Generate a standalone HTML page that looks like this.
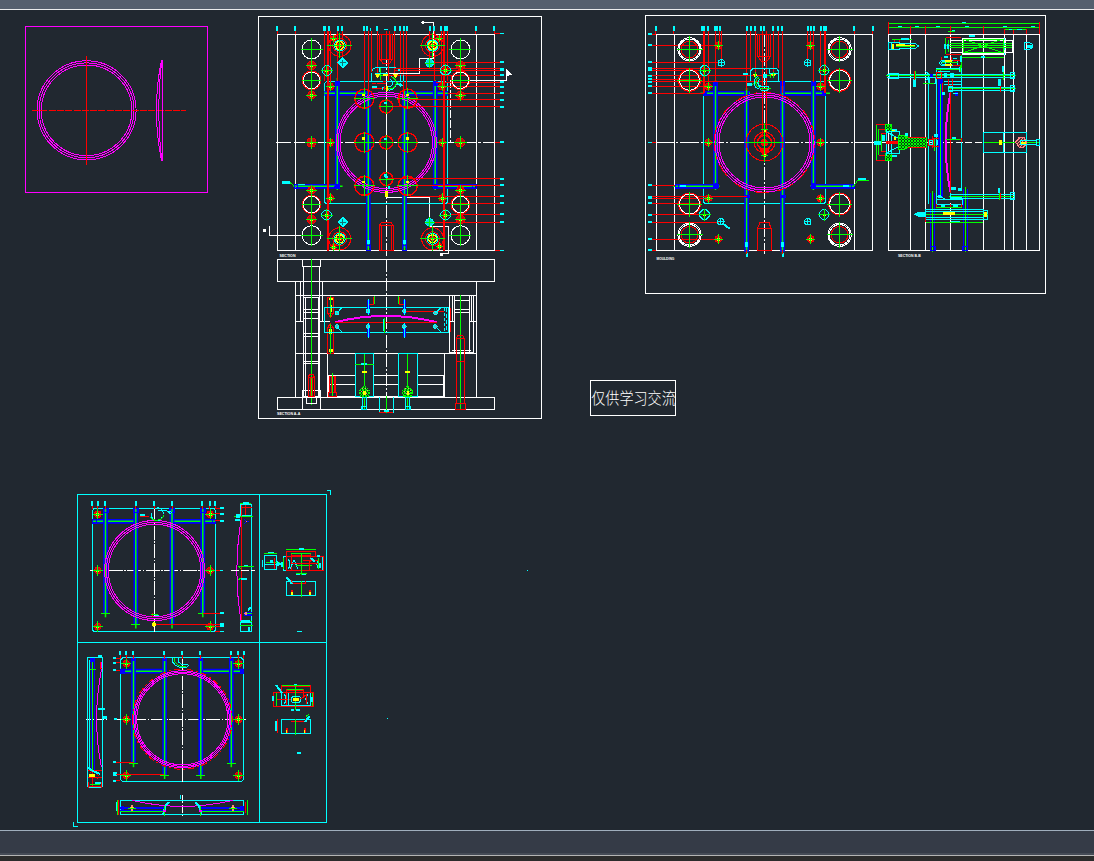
<!DOCTYPE html>
<html><head><meta charset="utf-8"><title>CAD</title>
<style>
html,body{margin:0;padding:0;background:#212830;overflow:hidden}
body{width:1094px;height:861px;position:relative;font-family:"Liberation Sans","Noto Sans CJK SC",sans-serif}
#top{position:absolute;left:0;top:0;width:1094px;height:9px;background:#545f6e}
#topl{position:absolute;left:0;top:9px;width:1094px;height:1px;background:#e8eaec}
#botl{position:absolute;left:0;top:830px;width:1094px;height:1px;background:#a0aebd}
#bot{position:absolute;left:0;top:831px;width:1094px;height:24px;background:#353b47;border-bottom:2px solid #454b56;box-sizing:border-box}
#botl2{position:absolute;left:0;top:855px;width:1094px;height:1px;background:#b4b4b4}
#bot2{position:absolute;left:0;top:856px;width:1094px;height:5px;background:#2b2b2b}
svg{position:absolute;left:0;top:0}
</style></head><body>
<div id="top"></div><div id="topl"></div>
<svg width="1094" height="861" viewBox="0 0 1094 861" fill="none" stroke-linecap="butt" shape-rendering="crispEdges">
<defs><pattern id="hx" width="3" height="3" patternUnits="userSpaceOnUse"><rect width="3" height="3" fill="#0a3a14"/><path d="M0 0L3 3M3 0L0 3" stroke="#00ff00" stroke-width="1"/></pattern><pattern id="hp" width="3" height="3" patternUnits="userSpaceOnUse"><rect width="3" height="3" fill="#5a3030"/><path d="M0 3L3 0" stroke="#ff9090" stroke-width="1"/></pattern></defs>
<path d="M25.5 26.5H207.5V192.5H25.5ZM37.1 110.3a49.5 49.5 0 1 0 99 0a49.5 49.5 0 1 0 -99 0ZM39.2 110.3a47.4 47.4 0 1 0 94.8 0a47.4 47.4 0 1 0 -94.8 0ZM41.3 110.3a45.3 45.3 0 1 0 90.6 0a45.3 45.3 0 1 0 -90.6 0Z" stroke="#ff00ff" stroke-width="1" fill="none"/>
<path d="M86.5 55.6L86.5 164.8" stroke="#ff0000" stroke-width="1" fill="none"/>
<path d="M32 110.5L186 110.5" stroke="#ff0000" stroke-width="1" fill="none" stroke-dasharray="7 1.3"/>
<path d="M162.5 60L162.5 160.8M161.5 60Q151.3 110.3 161.5 160.8M161.5 62Q155.9 110.3 161.5 158.8" stroke="#ff00ff" stroke-width="1" fill="none"/>
<path d="M590.5 380.5H675.5V415.5H590.5ZM258.5 16.5H541.5V418.5H258.5ZM277.5 34.5H494.5V250.5H277.5ZM295.5 34.3L295.5 250.5M476.5 34.3L476.5 250.5" stroke="#ffffff" stroke-width="1" fill="none"/>
<path d="M276 142.5L496 142.5" stroke="#ffffff" stroke-width="1" fill="none" stroke-dasharray="15 3 44 2 3 2"/>
<path d="M386.5 34L386.5 256" stroke="#ffffff" stroke-width="1" fill="none" stroke-dasharray="13 2 2 2"/>
<path d="M423 22.5L433.5 22.5M433.5 22.5L433.5 58.5M419 58.5L434 58.5M419.5 58.5L419.5 73.5M386.5 73.5L419.5 73.5" stroke="#ffffff" stroke-width="1" fill="none"/>
<path d="M421.8 22.3a1.2 1.2 0 1 0 2.4 0a1.2 1.2 0 1 0 -2.4 0Z" stroke="#ffffff" stroke-width="1" fill="#ffffff"/>
<path d="M386.5 197.5L429.5 197.5M429.5 197.3L429.5 226.5M429.3 226.5L448.8 226.5M448.5 226.5L448.5 253M440 253.5L449 253.5" stroke="#ffffff" stroke-width="1" fill="none"/>
<path d="M440 253H443V256H440Z" fill="#ffffff"/>
<path d="M386.5 73.7L386.5 197.3" stroke="#ffffff" stroke-width="1" fill="none"/>
<path d="M450.5 80.3L450.5 142" stroke="#ffffff" stroke-width="1" fill="none" stroke-dasharray="8 2"/>
<path d="M450.6 80.5L507 80.5M506.5 72L506.5 80.8" stroke="#ffffff" stroke-width="1" fill="none"/>
<path d="M506.6 70L511 74.3L506.6 76Z" stroke="#ffffff" stroke-width="1" fill="#ffffff"/>
<path d="M269.5 226L269.5 235.5M269.3 235.5L302.5 235.5" stroke="#ffffff" stroke-width="1" fill="none"/>
<path d="M263 228.5H265.5V232H263Z" fill="#ffffff"/>
<path d="M327.5 81.5H444.5Q447.5 81.5 447.5 84.5V200.5Q447.5 203.5 444.5 203.5H327.5Q324.5 203.5 324.5 200.5V84.5Q324.5 81.5 327.5 81.5Z" stroke="#00ffff" stroke-width="1" fill="none"/>
<path d="M324.3 93.3L366 93.3" stroke="#0000ff" stroke-width="4.7" fill="none" shape-rendering="geometricPrecision"/>
<path d="M324.3 93.3L366 93.3" stroke="#00ff00" stroke-width="1.5" fill="none" shape-rendering="geometricPrecision"/>
<path d="M404 93.3L448 93.3" stroke="#0000ff" stroke-width="4.7" fill="none" shape-rendering="geometricPrecision"/>
<path d="M404 93.3L448 93.3" stroke="#00ff00" stroke-width="1.5" fill="none" shape-rendering="geometricPrecision"/>
<path d="M337.3 83L337.3 188" stroke="#0000ff" stroke-width="4.7" fill="none" shape-rendering="geometricPrecision"/>
<path d="M337.3 78L337.3 190" stroke="#00ff00" stroke-width="1.5" fill="none" shape-rendering="geometricPrecision"/>
<path d="M435.2 83L435.2 188" stroke="#0000ff" stroke-width="4.7" fill="none" shape-rendering="geometricPrecision"/>
<path d="M435.2 80L435.2 190" stroke="#00ff00" stroke-width="1.5" fill="none" shape-rendering="geometricPrecision"/>
<path d="M368.3 91L368.3 248" stroke="#0000ff" stroke-width="4.7" fill="none" shape-rendering="geometricPrecision"/>
<path d="M368.3 91L368.3 250" stroke="#00ff00" stroke-width="1.5" fill="none" shape-rendering="geometricPrecision"/>
<path d="M404.5 91L404.5 248" stroke="#0000ff" stroke-width="4.7" fill="none" shape-rendering="geometricPrecision"/>
<path d="M404.5 91L404.5 250" stroke="#00ff00" stroke-width="1.5" fill="none" shape-rendering="geometricPrecision"/>
<path d="M295.3 186.3L339.6 186.3" stroke="#0000ff" stroke-width="4.7" fill="none" shape-rendering="geometricPrecision"/>
<path d="M293.3 186.3L342.6 186.3" stroke="#00ff00" stroke-width="1.5" fill="none" shape-rendering="geometricPrecision"/>
<path d="M434 186.3L475 186.3" stroke="#0000ff" stroke-width="4.7" fill="none" shape-rendering="geometricPrecision"/>
<path d="M434 186.3L475 186.3" stroke="#00ff00" stroke-width="1.5" fill="none" shape-rendering="geometricPrecision"/>
<path d="M335 81H340V86H335ZM433 81H438V86H433Z" fill="#0000ff"/>
<path d="M294.5 184.5H297.5V188.5H294.5ZM472.5 184.5H476.5V188.5H472.5ZM366.5 245.5H370.5V250.5H366.5ZM402.5 245.5H406.5V250.5H402.5Z" stroke="#0000ff" stroke-width="1" fill="none"/>
<path d="M367 240H369.5V244H367ZM403.3 240H405.8V244H403.3Z" fill="#00ffff"/>
<path d="M335 186.5a2.5 2.5 0 1 0 5 0a2.5 2.5 0 1 0 -5 0ZM432.9 186.5a2.5 2.5 0 1 0 5 0a2.5 2.5 0 1 0 -5 0Z" stroke="#0000ff" stroke-width="1" fill="#0000ff"/>
<path d="M336.3 142.4a50 50 0 1 0 100 0a50 50 0 1 0 -100 0ZM338.2 142.4a48.1 48.1 0 1 0 96.2 0a48.1 48.1 0 1 0 -96.2 0ZM340.1 142.4a46.2 46.2 0 1 0 92.4 0a46.2 46.2 0 1 0 -92.4 0Z" stroke="#ff00ff" stroke-width="1" fill="none"/>
<path d="M281.5 181H290V183.5H281.5Z" fill="#00ffff"/>
<path d="M290 182.5L294 186" stroke="#00ff00" stroke-width="1" fill="none"/>
<path d="M298 183.5H305V185H298ZM276 26H278V31H276ZM294 26H296V31H294ZM328 26H330V31H328ZM337 26H339V31H337ZM341 26H343V31H341ZM363 26H365V31H363ZM366 26H368V31H366ZM376 26H378V31H376ZM394 26H396V31H394ZM399 26H401V31H399ZM403 26H405V31H403ZM406 26H408V31H406ZM429 26H431V31H429ZM433 26H435V31H433ZM440 26H442V31H440ZM475 26H477V31H475ZM493 26H495V31H493ZM323.3 26H326.3V31H323.3ZM443.8 26H448V31H443.8ZM369.5 28H371V31H369.5ZM384 28.5H388V30H384Z" fill="#00ffff"/>
<path d="M324.5 31L324.5 81M330.5 31L330.5 87M337.5 31L337.5 81M342.5 31L342.5 63M364.5 31L364.5 98M368.5 31L368.5 96M377.5 31L377.5 75M394.5 31L394.5 75M400.5 31L400.5 73.5M403.5 31L403.5 98M406.5 31L406.5 89M429.5 31L429.5 63M434.5 31L434.5 81M441.5 31L441.5 86M447.5 31L447.5 81M277.5 31L277.5 34M295.5 31L295.5 34M475.5 31L475.5 34M494.5 31L494.5 34" stroke="#ff0000" stroke-width="1" fill="none"/>
<path d="M328 31L328 250.5M444 31L444 250.5" stroke="#ff0000" stroke-width="2" fill="none"/>
<path d="M386.5 31L386.5 60M389.5 31L389.5 60M379.5 34.5H392.5V59.5H379.5ZM381.5 34.3L381.5 59.4M390.5 34.3L390.5 59.4M380.3 59.4L383 63.6L389.5 63.6L392.3 59.4M379.5 225.5H393.5V250.5H379.5ZM379.5 225.3L381.5 222L391 222L393 225.3M381.5 225.3L381.5 250M391.5 225.3L391.5 250M430 62.5L499.5 62.5" stroke="#ff0000" stroke-width="1" fill="none"/>
<path d="M499.5 61.3H503.5V63.3H499.5Z" fill="#00ffff"/>
<path d="M395 68.5L499.5 68.5" stroke="#ff0000" stroke-width="1" fill="none"/>
<path d="M499.5 67.5H503.5V69.5H499.5Z" fill="#00ffff"/>
<path d="M395 70.5L499.5 70.5" stroke="#ff0000" stroke-width="1" fill="none"/>
<path d="M499.5 69.3H503.5V71.3H499.5Z" fill="#00ffff"/>
<path d="M377 75.5L499.5 75.5" stroke="#ff0000" stroke-width="1" fill="none"/>
<path d="M499.5 74.4H503.5V76.4H499.5Z" fill="#00ffff"/>
<path d="M435.5 82.5L499.5 82.5" stroke="#ff0000" stroke-width="1" fill="none"/>
<path d="M499.5 81.4H503.5V83.4H499.5Z" fill="#00ffff"/>
<path d="M442.5 86.5L499.5 86.5" stroke="#ff0000" stroke-width="1" fill="none"/>
<path d="M499.5 85.6H503.5V87.6H499.5Z" fill="#00ffff"/>
<path d="M448 93.5L499.5 93.5" stroke="#ff0000" stroke-width="1" fill="none"/>
<path d="M499.5 92.3H503.5V94.3H499.5Z" fill="#00ffff"/>
<path d="M409 99.5L499.5 99.5" stroke="#ff0000" stroke-width="1" fill="none"/>
<path d="M499.5 98.5H503.5V100.5H499.5Z" fill="#00ffff"/>
<path d="M386.5 106.5L499.5 106.5" stroke="#ff0000" stroke-width="1" fill="none"/>
<path d="M499.5 105.5H503.5V107.5H499.5Z" fill="#00ffff"/>
<path d="M386.5 178.5L499.5 178.5" stroke="#ff0000" stroke-width="1" fill="none"/>
<path d="M499.5 177.5H503.5V179.5H499.5Z" fill="#00ffff"/>
<path d="M416 185.5L499.5 185.5" stroke="#ff0000" stroke-width="1" fill="none"/>
<path d="M499.5 184.4H503.5V186.4H499.5Z" fill="#00ffff"/>
<path d="M409.5 196.5L499.5 196.5" stroke="#ff0000" stroke-width="1" fill="none"/>
<path d="M499.5 195.3H503.5V197.3H499.5Z" fill="#00ffff"/>
<path d="M447 203.5L499.5 203.5" stroke="#ff0000" stroke-width="1" fill="none"/>
<path d="M499.5 202H503.5V204H499.5Z" fill="#00ffff"/>
<path d="M451 214.5L499.5 214.5" stroke="#ff0000" stroke-width="1" fill="none"/>
<path d="M499.5 213.4H503.5V215.4H499.5Z" fill="#00ffff"/>
<path d="M433 222.5L499.5 222.5" stroke="#ff0000" stroke-width="1" fill="none"/>
<path d="M499.5 221.4H503.5V223.4H499.5Z" fill="#00ffff"/>
<path d="M494.6 33.5L500 33.5" stroke="#ff0000" stroke-width="1" fill="none"/>
<path d="M500 32.8H503.5V34.3H500Z" fill="#00ffff"/>
<path d="M494.6 142.5L500 142.5" stroke="#ff0000" stroke-width="1" fill="none"/>
<path d="M500 141.4H503.5V142.9H500Z" fill="#00ffff"/>
<path d="M494.6 250.5L500 250.5" stroke="#ff0000" stroke-width="1" fill="none"/>
<path d="M500 249.5H503.5V251H500Z" fill="#00ffff"/>
<path d="M302 49.4a9.5 9.5 0 1 0 19 0a9.5 9.5 0 1 0 -19 0Z" stroke="#ffffff" stroke-width="1" fill="none"/>
<path d="M300.5 49.5L322.5 49.5M311.5 38.4L311.5 60.4" stroke="#00ff00" stroke-width="1" fill="none"/>
<path d="M307.2 65.7a4.3 4.3 0 1 0 8.6 0a4.3 4.3 0 1 0 -8.6 0Z" stroke="#ff0000" stroke-width="1" fill="#c01010"/>
<path d="M310 64.7H313V67.2H310Z" fill="#ffff00"/>
<path d="M305.7 65.5L317.3 65.5M311.5 59.9L311.5 71.5" stroke="#00ff00" stroke-width="1" fill="none"/>
<path d="M303.2 80.3a8.3 8.3 0 1 0 16.6 0a8.3 8.3 0 1 0 -16.6 0Z" stroke="#ffffff" stroke-width="1" fill="none"/>
<path d="M302.2 80.3a9.3 9.3 0 1 0 18.6 0a9.3 9.3 0 1 0 -18.6 0Z" stroke="#ff0000" stroke-width="1" fill="none"/>
<path d="M301.7 80.5L321.3 80.5M311.5 70.5L311.5 90.1" stroke="#00ff00" stroke-width="1" fill="none"/>
<path d="M307.7 95.2a3.8 3.8 0 1 0 7.6 0a3.8 3.8 0 1 0 -7.6 0Z" stroke="#ff0000" stroke-width="1" fill="#c01010"/>
<path d="M310 94.2H313V96.7H310Z" fill="#ffff00"/>
<path d="M306.2 95.5L316.8 95.5M311.5 89.9L311.5 100.5" stroke="#00ff00" stroke-width="1" fill="none"/>
<path d="M306.9 142.5a4.6 4.6 0 1 0 9.2 0a4.6 4.6 0 1 0 -9.2 0Z" stroke="#ff0000" stroke-width="1" fill="#c01010"/>
<path d="M310 141.5H313V144H310Z" fill="#ffff00"/>
<path d="M305.4 142.5L317.6 142.5M311.5 136.4L311.5 148.6" stroke="#00ff00" stroke-width="1" fill="none"/>
<path d="M307.7 190.3a3.8 3.8 0 1 0 7.6 0a3.8 3.8 0 1 0 -7.6 0Z" stroke="#ff0000" stroke-width="1" fill="#c01010"/>
<path d="M310 189.3H313V191.8H310Z" fill="#ffff00"/>
<path d="M306.2 190.5L316.8 190.5M311.5 185L311.5 195.6" stroke="#00ff00" stroke-width="1" fill="none"/>
<path d="M303.2 204.5a8.3 8.3 0 1 0 16.6 0a8.3 8.3 0 1 0 -16.6 0Z" stroke="#ffffff" stroke-width="1" fill="none"/>
<path d="M302.2 204.5a9.3 9.3 0 1 0 18.6 0a9.3 9.3 0 1 0 -18.6 0Z" stroke="#ff0000" stroke-width="1" fill="none"/>
<path d="M301.7 204.5L321.3 204.5M311.5 194.7L311.5 214.3" stroke="#00ff00" stroke-width="1" fill="none"/>
<path d="M307.2 219.6a4.3 4.3 0 1 0 8.6 0a4.3 4.3 0 1 0 -8.6 0Z" stroke="#ff0000" stroke-width="1" fill="#c01010"/>
<path d="M310 218.6H313V221.1H310Z" fill="#ffff00"/>
<path d="M305.7 219.5L317.3 219.5M311.5 213.8L311.5 225.4" stroke="#00ff00" stroke-width="1" fill="none"/>
<path d="M302 235.2a9.5 9.5 0 1 0 19 0a9.5 9.5 0 1 0 -19 0Z" stroke="#ffffff" stroke-width="1" fill="none"/>
<path d="M300.5 235.5L322.5 235.5M311.5 224.2L311.5 246.2" stroke="#00ff00" stroke-width="1" fill="none"/>
<path d="M450.9 49.4a9.5 9.5 0 1 0 19 0a9.5 9.5 0 1 0 -19 0Z" stroke="#ffffff" stroke-width="1" fill="none"/>
<path d="M449.4 49.5L471.4 49.5M460.5 38.4L460.5 60.4" stroke="#00ff00" stroke-width="1" fill="none"/>
<path d="M456.1 65.7a4.3 4.3 0 1 0 8.6 0a4.3 4.3 0 1 0 -8.6 0Z" stroke="#ff0000" stroke-width="1" fill="#c01010"/>
<path d="M458.9 64.7H461.9V67.2H458.9Z" fill="#ffff00"/>
<path d="M454.6 65.5L466.2 65.5M460.5 59.9L460.5 71.5" stroke="#00ff00" stroke-width="1" fill="none"/>
<path d="M452.1 80.3a8.3 8.3 0 1 0 16.6 0a8.3 8.3 0 1 0 -16.6 0Z" stroke="#ffffff" stroke-width="1" fill="none"/>
<path d="M451.1 80.3a9.3 9.3 0 1 0 18.6 0a9.3 9.3 0 1 0 -18.6 0Z" stroke="#ff0000" stroke-width="1" fill="none"/>
<path d="M450.6 80.5L470.2 80.5M460.5 70.5L460.5 90.1" stroke="#00ff00" stroke-width="1" fill="none"/>
<path d="M456.6 95.2a3.8 3.8 0 1 0 7.6 0a3.8 3.8 0 1 0 -7.6 0Z" stroke="#ff0000" stroke-width="1" fill="#c01010"/>
<path d="M458.9 94.2H461.9V96.7H458.9Z" fill="#ffff00"/>
<path d="M455.1 95.5L465.7 95.5M460.5 89.9L460.5 100.5" stroke="#00ff00" stroke-width="1" fill="none"/>
<path d="M455.8 142.5a4.6 4.6 0 1 0 9.2 0a4.6 4.6 0 1 0 -9.2 0Z" stroke="#ff0000" stroke-width="1" fill="#c01010"/>
<path d="M458.9 141.5H461.9V144H458.9Z" fill="#ffff00"/>
<path d="M454.3 142.5L466.5 142.5M460.5 136.4L460.5 148.6" stroke="#00ff00" stroke-width="1" fill="none"/>
<path d="M456.6 190.3a3.8 3.8 0 1 0 7.6 0a3.8 3.8 0 1 0 -7.6 0Z" stroke="#ff0000" stroke-width="1" fill="#c01010"/>
<path d="M458.9 189.3H461.9V191.8H458.9Z" fill="#ffff00"/>
<path d="M455.1 190.5L465.7 190.5M460.5 185L460.5 195.6" stroke="#00ff00" stroke-width="1" fill="none"/>
<path d="M452.1 204.5a8.3 8.3 0 1 0 16.6 0a8.3 8.3 0 1 0 -16.6 0Z" stroke="#ffffff" stroke-width="1" fill="none"/>
<path d="M451.1 204.5a9.3 9.3 0 1 0 18.6 0a9.3 9.3 0 1 0 -18.6 0Z" stroke="#ff0000" stroke-width="1" fill="none"/>
<path d="M450.6 204.5L470.2 204.5M460.5 194.7L460.5 214.3" stroke="#00ff00" stroke-width="1" fill="none"/>
<path d="M456.1 219.6a4.3 4.3 0 1 0 8.6 0a4.3 4.3 0 1 0 -8.6 0Z" stroke="#ff0000" stroke-width="1" fill="#c01010"/>
<path d="M458.9 218.6H461.9V221.1H458.9Z" fill="#ffff00"/>
<path d="M454.6 219.5L466.2 219.5M460.5 213.8L460.5 225.4" stroke="#00ff00" stroke-width="1" fill="none"/>
<path d="M450.9 235.2a9.5 9.5 0 1 0 19 0a9.5 9.5 0 1 0 -19 0Z" stroke="#ffffff" stroke-width="1" fill="none"/>
<path d="M449.4 235.5L471.4 235.5M460.5 224.2L460.5 246.2" stroke="#00ff00" stroke-width="1" fill="none"/>
<path d="M327.1 86.6a3.2 3.2 0 1 0 6.4 0a3.2 3.2 0 1 0 -6.4 0Z" stroke="#ff0000" stroke-width="1" fill="#c01010"/>
<path d="M328.8 85.6H331.8V88.1H328.8Z" fill="#ffff00"/>
<path d="M325.6 86.5L335 86.5M330.5 81.9L330.5 91.3" stroke="#00ff00" stroke-width="1" fill="none"/>
<path d="M438.8 86.6a3.2 3.2 0 1 0 6.4 0a3.2 3.2 0 1 0 -6.4 0Z" stroke="#ff0000" stroke-width="1" fill="#c01010"/>
<path d="M440.5 85.6H443.5V88.1H440.5Z" fill="#ffff00"/>
<path d="M437.3 86.5L446.7 86.5M442.5 81.9L442.5 91.3" stroke="#00ff00" stroke-width="1" fill="none"/>
<path d="M327 142.5a3.2 3.2 0 1 0 6.4 0a3.2 3.2 0 1 0 -6.4 0Z" stroke="#ff0000" stroke-width="1" fill="#c01010"/>
<path d="M328.7 141.5H331.7V144H328.7Z" fill="#ffff00"/>
<path d="M325.5 142.5L334.9 142.5M330.5 137.8L330.5 147.2" stroke="#00ff00" stroke-width="1" fill="none"/>
<path d="M439 142.5a3.2 3.2 0 1 0 6.4 0a3.2 3.2 0 1 0 -6.4 0Z" stroke="#ff0000" stroke-width="1" fill="#c01010"/>
<path d="M440.7 141.5H443.7V144H440.7Z" fill="#ffff00"/>
<path d="M437.5 142.5L446.9 142.5M442.5 137.8L442.5 147.2" stroke="#00ff00" stroke-width="1" fill="none"/>
<path d="M327 198a3.2 3.2 0 1 0 6.4 0a3.2 3.2 0 1 0 -6.4 0Z" stroke="#ff0000" stroke-width="1" fill="#c01010"/>
<path d="M328.7 197H331.7V199.5H328.7Z" fill="#ffff00"/>
<path d="M325.5 198.5L334.9 198.5M330.5 193.3L330.5 202.7" stroke="#00ff00" stroke-width="1" fill="none"/>
<path d="M439 198a3.2 3.2 0 1 0 6.4 0a3.2 3.2 0 1 0 -6.4 0Z" stroke="#ff0000" stroke-width="1" fill="#c01010"/>
<path d="M440.7 197H443.7V199.5H440.7Z" fill="#ffff00"/>
<path d="M437.5 198.5L446.9 198.5M442.5 193.3L442.5 202.7" stroke="#00ff00" stroke-width="1" fill="none"/>
<path d="M328.8 45.5a11 11 0 1 0 22 0a11 11 0 1 0 -22 0ZM332.8 45.5a7 7 0 1 0 14 0a7 7 0 1 0 -14 0Z" stroke="#ff0000" stroke-width="1" fill="none"/>
<path d="M334.3 45.5a5.5 5.5 0 1 0 11 0a5.5 5.5 0 1 0 -11 0Z" stroke="#00ffff" stroke-width="1" fill="none"/>
<path d="M335.8 45.5a4 4 0 1 0 8 0a4 4 0 1 0 -8 0Z" stroke="#ffff00" stroke-width="1.5" fill="none"/>
<path d="M337.8 45.5a2 2 0 1 0 4 0a2 2 0 1 0 -4 0Z" stroke="#ff0000" stroke-width="1" fill="#ffff00"/>
<path d="M327.3 45.5L352.3 45.5M339.5 33L339.5 58" stroke="#00ff00" stroke-width="1" fill="none"/>
<path d="M421.6 45.5a11 11 0 1 0 22 0a11 11 0 1 0 -22 0ZM425.6 45.5a7 7 0 1 0 14 0a7 7 0 1 0 -14 0Z" stroke="#ff0000" stroke-width="1" fill="none"/>
<path d="M427.1 45.5a5.5 5.5 0 1 0 11 0a5.5 5.5 0 1 0 -11 0Z" stroke="#00ffff" stroke-width="1" fill="none"/>
<path d="M428.6 45.5a4 4 0 1 0 8 0a4 4 0 1 0 -8 0Z" stroke="#ffff00" stroke-width="1.5" fill="none"/>
<path d="M430.6 45.5a2 2 0 1 0 4 0a2 2 0 1 0 -4 0Z" stroke="#ff0000" stroke-width="1" fill="#ffff00"/>
<path d="M420.1 45.5L445.1 45.5M432.5 33L432.5 58" stroke="#00ff00" stroke-width="1" fill="none"/>
<path d="M328.7 238.8a11 11 0 1 0 22 0a11 11 0 1 0 -22 0ZM332.7 238.8a7 7 0 1 0 14 0a7 7 0 1 0 -14 0Z" stroke="#ff0000" stroke-width="1" fill="none"/>
<path d="M334.2 238.8a5.5 5.5 0 1 0 11 0a5.5 5.5 0 1 0 -11 0Z" stroke="#00ffff" stroke-width="1" fill="none"/>
<path d="M335.7 238.8a4 4 0 1 0 8 0a4 4 0 1 0 -8 0Z" stroke="#ffff00" stroke-width="1.5" fill="none"/>
<path d="M337.7 238.8a2 2 0 1 0 4 0a2 2 0 1 0 -4 0Z" stroke="#ff0000" stroke-width="1" fill="#ffff00"/>
<path d="M327.2 238.5L352.2 238.5M339.5 226.3L339.5 251.3" stroke="#00ff00" stroke-width="1" fill="none"/>
<path d="M421.5 238.8a11 11 0 1 0 22 0a11 11 0 1 0 -22 0ZM425.5 238.8a7 7 0 1 0 14 0a7 7 0 1 0 -14 0Z" stroke="#ff0000" stroke-width="1" fill="none"/>
<path d="M427 238.8a5.5 5.5 0 1 0 11 0a5.5 5.5 0 1 0 -11 0Z" stroke="#00ffff" stroke-width="1" fill="none"/>
<path d="M428.5 238.8a4 4 0 1 0 8 0a4 4 0 1 0 -8 0Z" stroke="#ffff00" stroke-width="1.5" fill="none"/>
<path d="M430.5 238.8a2 2 0 1 0 4 0a2 2 0 1 0 -4 0Z" stroke="#ff0000" stroke-width="1" fill="#ffff00"/>
<path d="M420 238.5L445 238.5M432.5 226.3L432.5 251.3" stroke="#00ff00" stroke-width="1" fill="none"/>
<path d="M331.3 38.5a2.2 2.2 0 1 0 4.4 0a2.2 2.2 0 1 0 -4.4 0Z" stroke="#ff0000" stroke-width="1" fill="#c01010"/>
<path d="M332 37.5H335V40H332Z" fill="#ffff00"/>
<path d="M329.8 38.5L337.2 38.5M333.5 34.8L333.5 42.2" stroke="#00ff00" stroke-width="1" fill="none"/>
<path d="M436.8 38.5a2.2 2.2 0 1 0 4.4 0a2.2 2.2 0 1 0 -4.4 0Z" stroke="#ff0000" stroke-width="1" fill="#c01010"/>
<path d="M437.5 37.5H440.5V40H437.5Z" fill="#ffff00"/>
<path d="M435.3 38.5L442.7 38.5M439.5 34.8L439.5 42.2" stroke="#00ff00" stroke-width="1" fill="none"/>
<path d="M331.3 247a2.2 2.2 0 1 0 4.4 0a2.2 2.2 0 1 0 -4.4 0Z" stroke="#ff0000" stroke-width="1" fill="#c01010"/>
<path d="M332 246H335V248.5H332Z" fill="#ffff00"/>
<path d="M329.8 247.5L337.2 247.5M333.5 243.3L333.5 250.7" stroke="#00ff00" stroke-width="1" fill="none"/>
<path d="M437.3 246a2.2 2.2 0 1 0 4.4 0a2.2 2.2 0 1 0 -4.4 0Z" stroke="#ff0000" stroke-width="1" fill="#c01010"/>
<path d="M438 245H441V247.5H438Z" fill="#ffff00"/>
<path d="M435.8 246.5L443.2 246.5M439.5 242.3L439.5 249.7" stroke="#00ff00" stroke-width="1" fill="none"/>
<path d="M347.4 62.9L342.6 67.7L337.8 62.9L342.6 58.1Z" stroke="#00ffff" stroke-width="1" fill="#00ffff"/>
<path d="M339.6 62.5L345.6 62.5M342.5 59.9L342.5 65.9" stroke="#107070" stroke-width="1" fill="none"/>
<path d="M347.6 222L342.8 226.8L338 222L342.8 217.2Z" stroke="#00ffff" stroke-width="1" fill="#00ffff"/>
<path d="M339.8 222.5L345.8 222.5M342.5 219L342.5 225" stroke="#107070" stroke-width="1" fill="none"/>
<path d="M425.8 63a3.8 3.8 0 1 0 7.6 0a3.8 3.8 0 1 0 -7.6 0Z" stroke="#00ffff" stroke-width="1" fill="#00d8d8"/>
<path d="M424.6 63.5L434.6 63.5M429.5 58L429.5 68" stroke="#00ff00" stroke-width="1" fill="none"/>
<path d="M425.7 222.4a3.8 3.8 0 1 0 7.6 0a3.8 3.8 0 1 0 -7.6 0Z" stroke="#00ffff" stroke-width="1" fill="#00d8d8"/>
<path d="M424.5 222.5L434.5 222.5M429.5 217.4L429.5 227.4" stroke="#00ff00" stroke-width="1" fill="none"/>
<path d="M331.42 72.4L328.73 75.11L324.9 75.12L322.19 72.43L322.18 68.6L324.87 65.89L328.7 65.88L331.41 68.57Z" stroke="#00ffff" stroke-width="1" fill="none"/>
<path d="M325.3 69.5H328.3V72H325.3Z" fill="#ffff00"/>
<path d="M320.8 70.5L332.8 70.5M326.5 64.5L326.5 76.5" stroke="#00ff00" stroke-width="1" fill="none"/>
<path d="M450.12 72.2L447.43 74.91L443.6 74.92L440.89 72.23L440.88 68.4L443.57 65.69L447.4 65.68L450.11 68.37Z" stroke="#00ffff" stroke-width="1" fill="none"/>
<path d="M444 69.3H447V71.8H444Z" fill="#ffff00"/>
<path d="M439.5 70.5L451.5 70.5M445.5 64.3L445.5 76.3" stroke="#00ff00" stroke-width="1" fill="none"/>
<path d="M331.22 216.9L328.53 219.61L324.7 219.62L321.99 216.93L321.98 213.1L324.67 210.39L328.5 210.38L331.21 213.07Z" stroke="#00ffff" stroke-width="1" fill="none"/>
<path d="M325.1 214H328.1V216.5H325.1Z" fill="#ffff00"/>
<path d="M320.6 215.5L332.6 215.5M326.5 209L326.5 221" stroke="#00ff00" stroke-width="1" fill="none"/>
<path d="M450.02 216.9L447.33 219.61L443.5 219.62L440.79 216.93L440.78 213.1L443.47 210.39L447.3 210.38L450.01 213.07Z" stroke="#00ffff" stroke-width="1" fill="none"/>
<path d="M443.9 214H446.9V216.5H443.9Z" fill="#ffff00"/>
<path d="M439.4 215.5L451.4 215.5M445.5 209L445.5 221" stroke="#00ff00" stroke-width="1" fill="none"/>
<path d="M354.9 98.7a9.5 9.5 0 1 0 19 0a9.5 9.5 0 1 0 -19 0Z" stroke="#ff0000" stroke-width="1.5" fill="none"/>
<path d="M353.9 98.5L374.9 98.5M364.5 88.2L364.5 109.2" stroke="#00ff00" stroke-width="1" fill="none"/>
<path d="M362.4 93.7H365.4V96.2H362.4Z" fill="#ffff00"/>
<path d="M354.9 142.4a9.5 9.5 0 1 0 19 0a9.5 9.5 0 1 0 -19 0Z" stroke="#ff0000" stroke-width="1.5" fill="none"/>
<path d="M353.9 142.5L374.9 142.5M364.5 131.9L364.5 152.9" stroke="#00ff00" stroke-width="1" fill="none"/>
<path d="M362.4 137.4H365.4V139.9H362.4Z" fill="#ffff00"/>
<path d="M354.9 185.9a9.5 9.5 0 1 0 19 0a9.5 9.5 0 1 0 -19 0Z" stroke="#ff0000" stroke-width="1.5" fill="none"/>
<path d="M353.9 185.5L374.9 185.5M364.5 175.4L364.5 196.4" stroke="#00ff00" stroke-width="1" fill="none"/>
<path d="M362.4 180.9H365.4V183.4H362.4Z" fill="#ffff00"/>
<path d="M398.1 98.7a9.5 9.5 0 1 0 19 0a9.5 9.5 0 1 0 -19 0Z" stroke="#ff0000" stroke-width="1.5" fill="none"/>
<path d="M397.1 98.5L418.1 98.5M407.5 88.2L407.5 109.2" stroke="#00ff00" stroke-width="1" fill="none"/>
<path d="M405.6 93.7H408.6V96.2H405.6Z" fill="#ffff00"/>
<path d="M398.1 142.4a9.5 9.5 0 1 0 19 0a9.5 9.5 0 1 0 -19 0Z" stroke="#ff0000" stroke-width="1.5" fill="none"/>
<path d="M397.1 142.5L418.1 142.5M407.5 131.9L407.5 152.9" stroke="#00ff00" stroke-width="1" fill="none"/>
<path d="M405.6 137.4H408.6V139.9H405.6Z" fill="#ffff00"/>
<path d="M398.1 185.9a9.5 9.5 0 1 0 19 0a9.5 9.5 0 1 0 -19 0Z" stroke="#ff0000" stroke-width="1.5" fill="none"/>
<path d="M397.1 185.5L418.1 185.5M407.5 175.4L407.5 196.4" stroke="#00ff00" stroke-width="1" fill="none"/>
<path d="M405.6 180.9H408.6V183.4H405.6Z" fill="#ffff00"/>
<path d="M379.8 106.5a6.5 6.5 0 1 0 13 0a6.5 6.5 0 1 0 -13 0Z" stroke="#ff0000" stroke-width="1.5" fill="none"/>
<path d="M378.8 106.5L393.8 106.5M386.5 99L386.5 114" stroke="#00ff00" stroke-width="1" fill="none"/>
<path d="M384.3 101.5H387.3V104H384.3Z" fill="#00ffff"/>
<path d="M379.8 142.5a6.5 6.5 0 1 0 13 0a6.5 6.5 0 1 0 -13 0Z" stroke="#ff0000" stroke-width="1.5" fill="none"/>
<path d="M378.8 142.5L393.8 142.5M386.5 135L386.5 150" stroke="#00ff00" stroke-width="1" fill="none"/>
<path d="M384.3 137.5H387.3V140H384.3Z" fill="#00ffff"/>
<path d="M379.8 179a6.5 6.5 0 1 0 13 0a6.5 6.5 0 1 0 -13 0Z" stroke="#ff0000" stroke-width="1.5" fill="none"/>
<path d="M378.8 179.5L393.8 179.5M386.5 171.5L386.5 186.5" stroke="#00ff00" stroke-width="1" fill="none"/>
<path d="M384.3 174H387.3V176.5H384.3Z" fill="#00ffff"/>
<path d="M371.7 82L371.7 72.5M371.7 72.5Q372 68 376 67.9M376 67.5L395.5 67.5M379.5 67.9L379.5 71.5" stroke="#00ffff" stroke-width="1" fill="none"/>
<path d="M398 69.3H400V70.6H398Z" fill="#00ffff"/>
<path d="M400.5 75L400.5 81.4M403.5 75L403.5 81.4" stroke="#00ffff" stroke-width="1" fill="none"/>
<path d="M380.5 67.5L380.5 79.5M377 75.5L385 75.5" stroke="#00ff00" stroke-width="1" fill="none"/>
<path d="M375 73.5L388 73.5" stroke="#00ffff" stroke-width="1" fill="none"/>
<path d="M387.8 73.5L419.5 73.5" stroke="#ffffff" stroke-width="1" fill="none"/>
<path d="M376 74.5L379.2 74.5L377.6 77.5ZM394 74.5L397.2 74.5L395.6 77.5Z" stroke="#ffff00" stroke-width="1" fill="#ffff00"/>
<path d="M382.9 74.2H387.8V76H382.9Z" fill="#ffff00"/>
<path d="M391.2 76.6A6.8 6.8 0 0 1 387.8 89.8" stroke="#00ffff" stroke-width="1" fill="none"/>
<path d="M392.3 77.3A5.6 5.6 0 0 1 388.4 88.4" stroke="#00ff00" stroke-width="1" fill="none"/>
<path d="M390 79.5A3.6 3.6 0 0 1 388 86.5" stroke="#00ffff" stroke-width="1" fill="none"/>
<path d="M397.9 83L400 83L402.7 85.5L400.5 86L397.9 84.2Z" stroke="#00ffff" stroke-width="1" fill="#00ffff"/>
<path d="M396 82.5L399.6 83.5" stroke="#00ff00" stroke-width="1" fill="none"/>
<path d="M372 83.5L376 83.5M377.3 83.5L386.4 83.5M372 88.5L386 88.5" stroke="#ff0000" stroke-width="1" fill="none"/>
<path d="M372 86H377V88.2H372Z" fill="#00ffff"/>
<path d="M382.5 81.5L386 81.5" stroke="#ff0000" stroke-width="1" fill="none"/>
<path d="M385 86.7A3 3 0 0 0 382 90" stroke="#00ffff" stroke-width="1" fill="none"/>
<path d="M385.7 85.7H387.5V90.5H385.7Z" fill="#ffff00"/>
<path d="M384.5 86L384.5 90M371.5 31L371.5 72M388.5 60L388.5 81M399.6 94L399.6 106.6L393 106.6" stroke="#ff0000" stroke-width="1" fill="none"/>
<path d="M384.8 191H387.5V197H384.8Z" fill="#ffff00"/>
<path d="M387.5 186H390V188.5H387.5ZM384.5 176H388V178H384.5Z" fill="#00ffff"/>
<path d="M277.5 259.5H494.5V281.5H277.5ZM277.5 397.5H494.5V409.5H277.5ZM295.5 281.5L295.5 397.4M476.5 281.5L476.5 397.4M295.6 295.5L476.3 295.5M295.6 353.5L476.3 353.5M295.6 321.5L303 321.5M320 321.5L330 321.5" stroke="#ffffff" stroke-width="1" fill="none"/>
<path d="M386.5 259L386.5 409" stroke="#ffffff" stroke-width="1" fill="none" stroke-dasharray="13 2 2 2"/>
<path d="M302.5 259.5H320.5V266.5H302.5ZM303.5 266L303.5 397.4M319.5 266L319.5 397.4M305.5 297L305.5 397M318.5 297L318.5 397M303.8 297.5L319.6 297.5M303.8 309.5L319.6 309.5M303.8 312.5L319.6 312.5M303.8 318.5L319.6 318.5M303.8 333.5L319.6 333.5M303.8 336.5L319.6 336.5M303.8 361.5L319.6 361.5M303.8 363.5L319.6 363.5M303.8 390.5L319.6 390.5M300.5 281.5L300.5 321M322.5 281.5L322.5 321M302.4 396.5L320.4 396.5M302.5 390L302.5 409M320.5 390L320.5 409" stroke="#ffffff" stroke-width="1" fill="none"/>
<path d="M311.5 259L311.5 405" stroke="#00ff00" stroke-width="1" fill="none"/>
<path d="M308.5 377.5H314.5V396.5H308.5ZM308.3 377L309.5 374.4L313 374.4L314.3 377M310.5 377L310.5 396M312.5 377L312.5 396" stroke="#ff0000" stroke-width="1" fill="none"/>
<path d="M306.5 397.5H316.5V403.5H306.5Z" stroke="#ffffff" stroke-width="1" fill="none"/>
<path d="M327.5 297.5H333.5V313.5H327.5ZM327.6 313L330.5 317.5L333.4 313" stroke="#ff0000" stroke-width="1" fill="none"/>
<path d="M328.5 297.5H332.5V299.5H328.5ZM329.5 305H331.5V312H329.5Z" fill="#ffff00"/>
<path d="M330.5 295.7L330.5 317" stroke="#00ff00" stroke-width="1" fill="none"/>
<path d="M327.5 327.5H333.5V353.5H327.5ZM327.8 327L330.4 324L333 327" stroke="#ff0000" stroke-width="1" fill="none"/>
<path d="M329.3 329H331.5V334H329.3ZM329 349H332.5V352H329Z" fill="#ffff00"/>
<path d="M330.5 324L330.5 353.6" stroke="#00ff00" stroke-width="1" fill="none"/>
<path d="M327.5 353.6L327.5 397.4" stroke="#ffffff" stroke-width="1" fill="none"/>
<path d="M324.5 307.5H448.5V332.5H324.5Z" stroke="#00ffff" stroke-width="1" fill="none"/>
<path d="M335.3 322.2Q386 309.6 436.7 322.2" stroke="#ff00ff" stroke-width="2" fill="none"/>
<path d="M335 322.5L437 322.5M404 311.5L444 311.5" stroke="#ff0000" stroke-width="1" fill="none"/>
<path d="M367.5 300L367.5 314M369.5 300L369.5 314M367.5 324L367.5 337M369.5 324L369.5 337" stroke="#0000ff" stroke-width="1" fill="none"/>
<path d="M366.4 311a1.8 1.8 0 1 0 3.6 0a1.8 1.8 0 1 0 -3.6 0ZM366.4 326.5a1.8 1.8 0 1 0 3.6 0a1.8 1.8 0 1 0 -3.6 0Z" stroke="#00ffff" stroke-width="1" fill="#80a0a0"/>
<path d="M368.5 299L368.5 315M368.5 323L368.5 338" stroke="#00ffff" stroke-width="1" fill="none"/>
<path d="M403.5 300L403.5 314M405.5 300L405.5 314M403.5 324L403.5 337M405.5 324L405.5 337" stroke="#0000ff" stroke-width="1" fill="none"/>
<path d="M402.5 311a1.8 1.8 0 1 0 3.6 0a1.8 1.8 0 1 0 -3.6 0ZM402.5 326.5a1.8 1.8 0 1 0 3.6 0a1.8 1.8 0 1 0 -3.6 0Z" stroke="#00ffff" stroke-width="1" fill="#80a0a0"/>
<path d="M404.5 299L404.5 315M404.5 323L404.5 338" stroke="#00ffff" stroke-width="1" fill="none"/>
<path d="M368.5 304L373.5 304L373.5 297" stroke="#ff0000" stroke-width="1" fill="none"/>
<path d="M374.5 296L374.5 304" stroke="#00ff00" stroke-width="1" fill="none"/>
<path d="M404 304L399 304L399 297" stroke="#ff0000" stroke-width="1" fill="none"/>
<path d="M398.5 296L398.5 304" stroke="#00ff00" stroke-width="1" fill="none"/>
<path d="M335.2 313a1.8 1.8 0 1 0 3.6 0a1.8 1.8 0 1 0 -3.6 0ZM335.2 326.5a1.8 1.8 0 1 0 3.6 0a1.8 1.8 0 1 0 -3.6 0Z" stroke="#00ffff" stroke-width="1" fill="#80a0a0"/>
<path d="M337 313L342 307.5M337 326.5L342 332" stroke="#00ffff" stroke-width="1" fill="none"/>
<path d="M433.7 313a1.8 1.8 0 1 0 3.6 0a1.8 1.8 0 1 0 -3.6 0ZM433.7 326.5a1.8 1.8 0 1 0 3.6 0a1.8 1.8 0 1 0 -3.6 0Z" stroke="#00ffff" stroke-width="1" fill="#80a0a0"/>
<path d="M435.5 313L441 307.5M435.5 326.5L441 332" stroke="#00ffff" stroke-width="1" fill="none"/>
<path d="M384.5 318L384.5 333" stroke="#00ff00" stroke-width="1" fill="none"/>
<path d="M383.5 319L383.5 331" stroke="#00ffff" stroke-width="1" fill="none"/>
<path d="M444.5 308L444.5 332" stroke="#00ffff" stroke-width="1" fill="none" stroke-dasharray="3 2"/>
<path d="M446.5 308L446.5 332" stroke="#00ffff" stroke-width="1" fill="none" stroke-dasharray="4 2"/>
<path d="M449.5 307L449.5 333" stroke="#00ff00" stroke-width="1" fill="none"/>
<path d="M450.5 308L450.5 332" stroke="#ff0000" stroke-width="1" fill="none"/>
<path d="M328.2 375.5L355 375.5M328.2 384.5L355 384.5M328.2 396.5L355 396.5M373.9 375.5L398 375.5M373.9 384.5L398 384.5M373.9 396.5L398 396.5M417 375.5L443.8 375.5M417 384.5L443.8 384.5M417 396.5L443.8 396.5M328.5 375.4L328.5 396M443.5 375.4L443.5 396" stroke="#ffffff" stroke-width="1" fill="none"/>
<path d="M329.5 376.5H335.5V392.5H329.5ZM328.5 392.5H336.5V396.5H328.5Z" stroke="#ff0000" stroke-width="1" fill="none"/>
<path d="M332.5 373L332.5 396" stroke="#00ff00" stroke-width="1" fill="none"/>
<path d="M331.5 376L331.5 392M334.5 376L334.5 392" stroke="#ff0000" stroke-width="1" fill="none"/>
<path d="M355.5 353.5H373.5V396.5H355.5Z" stroke="#00ffff" stroke-width="1" fill="none"/>
<path d="M355 364.5L373.9 364.5" stroke="#00ff00" stroke-width="1" fill="none"/>
<path d="M361.45 363H367.45V365H361.45Z" fill="#00ffff"/>
<path d="M364.5 353.6L364.5 410" stroke="#00ff00" stroke-width="1" fill="none"/>
<path d="M361.95 370.5H366.95V372.5H361.95Z" fill="#ffff00"/>
<path d="M364.45 385.5L369.95 391L368.45 396.5H360.45L358.95 391Z" fill="url(#hx)" stroke="#00ff00" stroke-width="1" stroke-dasharray="2 1"/>
<path d="M361.45 391a3 3 0 1 0 6 0a3 3 0 1 0 -6 0Z" stroke="#ff8080" stroke-width="1" fill="none" stroke-dasharray="1 2"/>
<path d="M363.45 391H365.95V395H363.45Z" fill="#ffff00"/>
<path d="M362.5 397.5H366.5V409.5H362.5ZM361.5 406.5H366.5V409.5H361.5ZM398.5 353.5H417.5V396.5H398.5Z" stroke="#00ffff" stroke-width="1" fill="none"/>
<path d="M407.5 353.6L407.5 410" stroke="#00ff00" stroke-width="1" fill="none"/>
<path d="M405 370.5H410V372.5H405Z" fill="#ffff00"/>
<path d="M407.5 385.5L413 391L411.5 396.5H403.5L402 391Z" fill="url(#hx)" stroke="#00ff00" stroke-width="1" stroke-dasharray="2 1"/>
<path d="M404.5 391a3 3 0 1 0 6 0a3 3 0 1 0 -6 0Z" stroke="#ff8080" stroke-width="1" fill="none" stroke-dasharray="1 2"/>
<path d="M406.5 391H409V395H406.5Z" fill="#ffff00"/>
<path d="M405.5 397.5H409.5V409.5H405.5ZM405.5 406.5H410.5V409.5H405.5ZM379.5 397.4L379.5 412.6M393.5 397.4L393.5 412.6" stroke="#00ffff" stroke-width="1" fill="none"/>
<path d="M379 412.5L393.2 412.5" stroke="#ff0000" stroke-width="1" fill="none"/>
<path d="M386.5 396L386.5 413" stroke="#00ff00" stroke-width="1" fill="none"/>
<path d="M384 410H389V412H384Z" fill="#00ffff"/>
<path d="M444.5 353.6L444.5 397.4M449.5 295.5H473.5V352.5H449.5ZM454.5 295L454.5 352M469.5 295L469.5 352M454 300.5L469 300.5M454 309.5L469 309.5M454 312.5L469 312.5M449.9 321.5L454 321.5M469.2 321.5L476.3 321.5M452 350.5L471 350.5M452.5 295L452.5 321M471.5 295L471.5 321" stroke="#ffffff" stroke-width="1" fill="none"/>
<path d="M460.5 295L460.5 409" stroke="#00ff00" stroke-width="1" fill="none"/>
<path d="M456.5 338.5H464.5V403.5H456.5ZM456.4 338L458 335.4L462.5 335.4L464.1 338M455.5 403.5H465.5V409.5H455.5ZM456.4 361.5L464.1 361.5" stroke="#ff0000" stroke-width="1" fill="none"/>
<path d="M645.5 15.5H1045.5V293.5H645.5ZM656.5 34.5H872.5V250.5H656.5ZM674.5 34.4L674.5 250.4M854.5 34.4L854.5 250.4" stroke="#ffffff" stroke-width="1" fill="none"/>
<path d="M655 142.5L873 142.5" stroke="#ffffff" stroke-width="1" fill="none" stroke-dasharray="19 2 2 2"/>
<path d="M764.5 34L764.5 254" stroke="#ffffff" stroke-width="1" fill="none" stroke-dasharray="13 2 2 2"/>
<path d="M706.5 81.5H822.5Q825.5 81.5 825.5 84.5V200.5Q825.5 203.5 822.5 203.5H706.5Q703.5 203.5 703.5 200.5V84.5Q703.5 81.5 706.5 81.5Z" stroke="#00ffff" stroke-width="1" fill="none"/>
<path d="M703.4 93.3L750 93.3" stroke="#0000ff" stroke-width="4.7" fill="none" shape-rendering="geometricPrecision"/>
<path d="M700.4 93.3L750 93.3" stroke="#00ff00" stroke-width="1.5" fill="none" shape-rendering="geometricPrecision"/>
<path d="M780.5 93.3L826 93.3" stroke="#0000ff" stroke-width="4.7" fill="none" shape-rendering="geometricPrecision"/>
<path d="M780.5 93.3L830 93.3" stroke="#00ff00" stroke-width="1.5" fill="none" shape-rendering="geometricPrecision"/>
<path d="M715.5 83L715.5 188" stroke="#0000ff" stroke-width="4.7" fill="none" shape-rendering="geometricPrecision"/>
<path d="M715.5 80L715.5 190" stroke="#00ff00" stroke-width="1.5" fill="none" shape-rendering="geometricPrecision"/>
<path d="M813.4 83L813.4 188" stroke="#0000ff" stroke-width="4.7" fill="none" shape-rendering="geometricPrecision"/>
<path d="M813.4 80L813.4 190" stroke="#00ff00" stroke-width="1.5" fill="none" shape-rendering="geometricPrecision"/>
<path d="M746.6 91L746.6 252" stroke="#0000ff" stroke-width="4.7" fill="none" shape-rendering="geometricPrecision"/>
<path d="M746.6 88L746.6 254" stroke="#00ff00" stroke-width="1.5" fill="none" shape-rendering="geometricPrecision"/>
<path d="M782.5 83L782.5 252" stroke="#0000ff" stroke-width="4.7" fill="none" shape-rendering="geometricPrecision"/>
<path d="M782.5 80L782.5 254" stroke="#00ff00" stroke-width="1.5" fill="none" shape-rendering="geometricPrecision"/>
<path d="M675 186.3L717.6 186.3" stroke="#0000ff" stroke-width="4.7" fill="none" shape-rendering="geometricPrecision"/>
<path d="M673 186.3L719.6 186.3" stroke="#00ff00" stroke-width="1.5" fill="none" shape-rendering="geometricPrecision"/>
<path d="M812 186.3L854 186.3" stroke="#0000ff" stroke-width="4.7" fill="none" shape-rendering="geometricPrecision"/>
<path d="M810 186.3L854 186.3" stroke="#00ff00" stroke-width="1.5" fill="none" shape-rendering="geometricPrecision"/>
<path d="M713 81H718V85.5H713ZM780 81H785V85.5H780ZM810.9 81H815.9V85.5H810.9ZM703 91H707V96H703ZM822 91H826V96H822Z" fill="#0000ff"/>
<path d="M675.5 184.5H678.5V188.5H675.5ZM851.5 184.5H854.5V188.5H851.5Z" stroke="#0000ff" stroke-width="1" fill="none"/>
<path d="M713.5 186.3a2.5 2.5 0 1 0 5 0a2.5 2.5 0 1 0 -5 0ZM810.9 186.3a2.5 2.5 0 1 0 5 0a2.5 2.5 0 1 0 -5 0Z" stroke="#0000ff" stroke-width="1" fill="#0000ff"/>
<path d="M854 186L857.6 180L868.5 180" stroke="#00ff00" stroke-width="1" fill="none"/>
<path d="M858 178H866V180H858ZM843 185H849V187H843ZM680 185H686V187H680ZM745.1 242H748.1V247H745.1ZM745.6 253H747.6V257H745.6Z" fill="#00ffff"/>
<path d="M746.5 250L746.5 254" stroke="#ff0000" stroke-width="1" fill="none"/>
<path d="M743.6 196.5L749.6 196.5" stroke="#0000ff" stroke-width="3" fill="none"/>
<path d="M781 242H784V247H781ZM781.5 253H783.5V257H781.5Z" fill="#00ffff"/>
<path d="M782.5 250L782.5 254" stroke="#ff0000" stroke-width="1" fill="none"/>
<path d="M779.5 196.5L785.5 196.5" stroke="#0000ff" stroke-width="3" fill="none"/>
<path d="M714.9 142.5a49.6 49.6 0 1 0 99.2 0a49.6 49.6 0 1 0 -99.2 0ZM717 142.5a47.5 47.5 0 1 0 95 0a47.5 47.5 0 1 0 -95 0ZM719 142.5a45.5 45.5 0 1 0 91 0a45.5 45.5 0 1 0 -91 0Z" stroke="#ff00ff" stroke-width="1" fill="none"/>
<path d="M714.3 142.5a50.2 50.2 0 1 0 100.4 0a50.2 50.2 0 1 0 -100.4 0Z" stroke="#ff0000" stroke-width="1" fill="none" stroke-dasharray="9 5 3 6 14 9"/>
<path d="M655 26H657V31H655ZM673 26H675V31H673ZM707 26H709V31H707ZM719 26H721V31H719ZM746 26H748V31H746ZM750 26H752V31H750ZM754 26H756V31H754ZM760 26H762V31H760ZM763 26H765V31H763ZM772 26H774V31H772ZM777 26H779V31H777ZM781 26H783V31H781ZM807 26H809V31H807ZM810 26H812V31H810ZM813 26H815V31H813ZM820 26H822V31H820ZM853 26H855V31H853ZM872 26H874V31H872ZM701.2 26H704.8V31H701.2ZM714 26H717.5V31H714ZM822.5 26H826.5V31H822.5Z" fill="#00ffff"/>
<path d="M708.5 31L708.5 86M715.5 31L715.5 82M719.5 31L719.5 45M721.5 31L721.5 62M746.5 31L746.5 90M750.5 31L750.5 71M755.5 31L755.5 75M762.5 31L762.5 134M766.5 31L766.5 134M773.5 31L773.5 75M778.5 31L778.5 68M782.5 31L782.5 93M807.5 31L807.5 62M810.5 31L810.5 45M813.5 31L813.5 82M820.5 31L820.5 86" stroke="#ff0000" stroke-width="1" fill="none"/>
<path d="M704 31L704 93M825 31L825 93" stroke="#ff0000" stroke-width="2" fill="none"/>
<path d="M655.5 31L655.5 34M673.5 31L673.5 34M854.5 31L854.5 34M872.5 31L872.5 34M757.5 34.5H770.5V56.5H757.5ZM758 56.4L761 61.2L767 61.2L770.5 56.4M759.5 34.4L759.5 56M768.5 34.4L768.5 56M757.5 228.5H771.5V250.5H757.5ZM757.4 228.7L760 222.2L769 222.2L771 228.7M652 45.5L719 45.5" stroke="#ff0000" stroke-width="1" fill="none"/>
<path d="M648 44.3H652V46.3H648Z" fill="#00ffff"/>
<path d="M652 62.5L721 62.5" stroke="#ff0000" stroke-width="1" fill="none"/>
<path d="M648 61.4H652V63.4H648Z" fill="#00ffff"/>
<path d="M652 68.5L750 68.5" stroke="#ff0000" stroke-width="1" fill="none"/>
<path d="M648 67.2H652V69.2H648Z" fill="#00ffff"/>
<path d="M652 70.5L704 70.5" stroke="#ff0000" stroke-width="1" fill="none"/>
<path d="M648 69.2H652V71.2H648Z" fill="#00ffff"/>
<path d="M652 75.5L775 75.5" stroke="#ff0000" stroke-width="1" fill="none"/>
<path d="M648 74.6H652V76.6H648Z" fill="#00ffff"/>
<path d="M652 79.5L700 79.5" stroke="#ff0000" stroke-width="1" fill="none"/>
<path d="M648 78.1H652V80.1H648Z" fill="#00ffff"/>
<path d="M652 81.5L761.5 81.5" stroke="#ff0000" stroke-width="1" fill="none"/>
<path d="M648 80.5H652V82.5H648Z" fill="#00ffff"/>
<path d="M652 86.5L708 86.5" stroke="#ff0000" stroke-width="1" fill="none"/>
<path d="M648 85H652V87H648Z" fill="#00ffff"/>
<path d="M652 93.5L704 93.5" stroke="#ff0000" stroke-width="1" fill="none"/>
<path d="M648 92.3H652V94.3H648Z" fill="#00ffff"/>
<path d="M652 185.5L675 185.5" stroke="#ff0000" stroke-width="1" fill="none"/>
<path d="M648 184.3H652V186.3H648Z" fill="#00ffff"/>
<path d="M652 196.5L747 196.5" stroke="#ff0000" stroke-width="1" fill="none"/>
<path d="M648 195.5H652V197.5H648Z" fill="#00ffff"/>
<path d="M652 198.5L708 198.5" stroke="#ff0000" stroke-width="1" fill="none"/>
<path d="M648 197H652V199H648Z" fill="#00ffff"/>
<path d="M652 203.5L700 203.5" stroke="#ff0000" stroke-width="1" fill="none"/>
<path d="M648 202H652V204H648Z" fill="#00ffff"/>
<path d="M652 214.5L704 214.5" stroke="#ff0000" stroke-width="1" fill="none"/>
<path d="M648 213.5H652V215.5H648Z" fill="#00ffff"/>
<path d="M652 222.5L719 222.5" stroke="#ff0000" stroke-width="1" fill="none"/>
<path d="M648 221.2H652V223.2H648Z" fill="#00ffff"/>
<path d="M652 239.5L717 239.5" stroke="#ff0000" stroke-width="1" fill="none"/>
<path d="M648 238.1H652V240.1H648Z" fill="#00ffff"/>
<path d="M651 34.5L656.4 34.5" stroke="#ff0000" stroke-width="1" fill="none"/>
<path d="M648 33.4H651.5V34.9H648Z" fill="#00ffff"/>
<path d="M651 142.5L656.4 142.5" stroke="#ff0000" stroke-width="1" fill="none"/>
<path d="M648 141.5H651.5V143H648Z" fill="#00ffff"/>
<path d="M651 250.5L656.4 250.5" stroke="#ff0000" stroke-width="1" fill="none"/>
<path d="M648 249.4H651.5V250.9H648Z" fill="#00ffff"/>
<path d="M677.9 49.4a11.6 11.6 0 1 0 23.2 0a11.6 11.6 0 1 0 -23.2 0ZM679.2 49.4a10.3 10.3 0 1 0 20.6 0a10.3 10.3 0 1 0 -20.6 0Z" stroke="#ffffff" stroke-width="1" fill="none"/>
<path d="M681.2 49.4a8.3 8.3 0 1 0 16.6 0a8.3 8.3 0 1 0 -16.6 0Z" stroke="#ff0000" stroke-width="1" fill="none"/>
<path d="M676.5 49.5L702.5 49.5M689.5 36.4L689.5 62.4" stroke="#00ff00" stroke-width="1" fill="none"/>
<path d="M679.5 80.3a10 10 0 1 0 20 0a10 10 0 1 0 -20 0Z" stroke="#ffffff" stroke-width="1" fill="none"/>
<path d="M678.5 80.3a11 11 0 1 0 22 0a11 11 0 1 0 -22 0Z" stroke="#ff0000" stroke-width="1" fill="none"/>
<path d="M677 80.5L702 80.5M689.5 67.8L689.5 92.8" stroke="#00ff00" stroke-width="1" fill="none"/>
<path d="M679.5 204a10 10 0 1 0 20 0a10 10 0 1 0 -20 0Z" stroke="#ffffff" stroke-width="1" fill="none"/>
<path d="M678.5 204a11 11 0 1 0 22 0a11 11 0 1 0 -22 0Z" stroke="#ff0000" stroke-width="1" fill="none"/>
<path d="M677 204.5L702 204.5M689.5 191.5L689.5 216.5" stroke="#00ff00" stroke-width="1" fill="none"/>
<path d="M677.9 234.8a11.6 11.6 0 1 0 23.2 0a11.6 11.6 0 1 0 -23.2 0ZM679.2 234.8a10.3 10.3 0 1 0 20.6 0a10.3 10.3 0 1 0 -20.6 0Z" stroke="#ffffff" stroke-width="1" fill="none"/>
<path d="M681.2 234.8a8.3 8.3 0 1 0 16.6 0a8.3 8.3 0 1 0 -16.6 0Z" stroke="#ff0000" stroke-width="1" fill="none"/>
<path d="M676.5 234.5L702.5 234.5M689.5 221.8L689.5 247.8" stroke="#00ff00" stroke-width="1" fill="none"/>
<path d="M828 49.4a11.6 11.6 0 1 0 23.2 0a11.6 11.6 0 1 0 -23.2 0ZM829.3 49.4a10.3 10.3 0 1 0 20.6 0a10.3 10.3 0 1 0 -20.6 0Z" stroke="#ffffff" stroke-width="1" fill="none"/>
<path d="M831.3 49.4a8.3 8.3 0 1 0 16.6 0a8.3 8.3 0 1 0 -16.6 0Z" stroke="#ff0000" stroke-width="1" fill="none"/>
<path d="M826.6 49.5L852.6 49.5M839.5 36.4L839.5 62.4" stroke="#00ff00" stroke-width="1" fill="none"/>
<path d="M829.6 80.3a10 10 0 1 0 20 0a10 10 0 1 0 -20 0Z" stroke="#ffffff" stroke-width="1" fill="none"/>
<path d="M828.6 80.3a11 11 0 1 0 22 0a11 11 0 1 0 -22 0Z" stroke="#ff0000" stroke-width="1" fill="none"/>
<path d="M827.1 80.5L852.1 80.5M839.5 67.8L839.5 92.8" stroke="#00ff00" stroke-width="1" fill="none"/>
<path d="M829.6 204a10 10 0 1 0 20 0a10 10 0 1 0 -20 0Z" stroke="#ffffff" stroke-width="1" fill="none"/>
<path d="M828.6 204a11 11 0 1 0 22 0a11 11 0 1 0 -22 0Z" stroke="#ff0000" stroke-width="1" fill="none"/>
<path d="M827.1 204.5L852.1 204.5M839.5 191.5L839.5 216.5" stroke="#00ff00" stroke-width="1" fill="none"/>
<path d="M828 234.8a11.6 11.6 0 1 0 23.2 0a11.6 11.6 0 1 0 -23.2 0ZM829.3 234.8a10.3 10.3 0 1 0 20.6 0a10.3 10.3 0 1 0 -20.6 0Z" stroke="#ffffff" stroke-width="1" fill="none"/>
<path d="M831.3 234.8a8.3 8.3 0 1 0 16.6 0a8.3 8.3 0 1 0 -16.6 0Z" stroke="#ff0000" stroke-width="1" fill="none"/>
<path d="M826.6 234.5L852.6 234.5M839.5 221.8L839.5 247.8" stroke="#00ff00" stroke-width="1" fill="none"/>
<path d="M715.4 45.5a3.2 3.2 0 1 0 6.4 0a3.2 3.2 0 1 0 -6.4 0Z" stroke="#ff0000" stroke-width="1" fill="#c01010"/>
<path d="M717.1 44.5H720.1V47H717.1Z" fill="#ffff00"/>
<path d="M713.9 45.5L723.3 45.5M718.5 40.8L718.5 50.2" stroke="#00ff00" stroke-width="1" fill="none"/>
<path d="M807.3 45.5a3.2 3.2 0 1 0 6.4 0a3.2 3.2 0 1 0 -6.4 0Z" stroke="#ff0000" stroke-width="1" fill="#c01010"/>
<path d="M809 44.5H812V47H809Z" fill="#ffff00"/>
<path d="M805.8 45.5L815.2 45.5M810.5 40.8L810.5 50.2" stroke="#00ff00" stroke-width="1" fill="none"/>
<path d="M705.2 86.5a3.2 3.2 0 1 0 6.4 0a3.2 3.2 0 1 0 -6.4 0Z" stroke="#ff0000" stroke-width="1" fill="#c01010"/>
<path d="M706.9 85.5H709.9V88H706.9Z" fill="#ffff00"/>
<path d="M703.7 86.5L713.1 86.5M708.5 81.8L708.5 91.2" stroke="#00ff00" stroke-width="1" fill="none"/>
<path d="M817.2 86.5a3.2 3.2 0 1 0 6.4 0a3.2 3.2 0 1 0 -6.4 0Z" stroke="#ff0000" stroke-width="1" fill="#c01010"/>
<path d="M818.9 85.5H821.9V88H818.9Z" fill="#ffff00"/>
<path d="M815.7 86.5L825.1 86.5M820.5 81.8L820.5 91.2" stroke="#00ff00" stroke-width="1" fill="none"/>
<path d="M705.2 142.5a3.2 3.2 0 1 0 6.4 0a3.2 3.2 0 1 0 -6.4 0Z" stroke="#ff0000" stroke-width="1" fill="#c01010"/>
<path d="M706.9 141.5H709.9V144H706.9Z" fill="#ffff00"/>
<path d="M703.7 142.5L713.1 142.5M708.5 137.8L708.5 147.2" stroke="#00ff00" stroke-width="1" fill="none"/>
<path d="M817.2 142.5a3.2 3.2 0 1 0 6.4 0a3.2 3.2 0 1 0 -6.4 0Z" stroke="#ff0000" stroke-width="1" fill="#c01010"/>
<path d="M818.9 141.5H821.9V144H818.9Z" fill="#ffff00"/>
<path d="M815.7 142.5L825.1 142.5M820.5 137.8L820.5 147.2" stroke="#00ff00" stroke-width="1" fill="none"/>
<path d="M705.3 198.2a3.2 3.2 0 1 0 6.4 0a3.2 3.2 0 1 0 -6.4 0Z" stroke="#ff0000" stroke-width="1" fill="#c01010"/>
<path d="M707 197.2H710V199.7H707Z" fill="#ffff00"/>
<path d="M703.8 198.5L713.2 198.5M708.5 193.5L708.5 202.9" stroke="#00ff00" stroke-width="1" fill="none"/>
<path d="M817.3 198.4a3.2 3.2 0 1 0 6.4 0a3.2 3.2 0 1 0 -6.4 0Z" stroke="#ff0000" stroke-width="1" fill="#c01010"/>
<path d="M819 197.4H822V199.9H819Z" fill="#ffff00"/>
<path d="M815.8 198.5L825.2 198.5M820.5 193.7L820.5 203.1" stroke="#00ff00" stroke-width="1" fill="none"/>
<path d="M715.1 239.1a3.2 3.2 0 1 0 6.4 0a3.2 3.2 0 1 0 -6.4 0Z" stroke="#ff0000" stroke-width="1" fill="#c01010"/>
<path d="M716.8 238.1H719.8V240.6H716.8Z" fill="#ffff00"/>
<path d="M713.6 239.5L723 239.5M718.5 234.4L718.5 243.8" stroke="#00ff00" stroke-width="1" fill="none"/>
<path d="M807.4 239a3.2 3.2 0 1 0 6.4 0a3.2 3.2 0 1 0 -6.4 0Z" stroke="#ff0000" stroke-width="1" fill="#c01010"/>
<path d="M809.1 238H812.1V240.5H809.1Z" fill="#ffff00"/>
<path d="M805.9 239.5L815.3 239.5M810.5 234.3L810.5 243.7" stroke="#00ff00" stroke-width="1" fill="none"/>
<path d="M718.1 62.9a3.2 3.2 0 1 0 6.4 0a3.2 3.2 0 1 0 -6.4 0ZM718.1 62.5L724.5 62.5M721.5 59.7L721.5 66.1M804.5 62.9a3.2 3.2 0 1 0 6.4 0a3.2 3.2 0 1 0 -6.4 0ZM804.5 62.5L810.9 62.5M807.5 59.7L807.5 66.1M717.7 221.8a3.2 3.2 0 1 0 6.4 0a3.2 3.2 0 1 0 -6.4 0ZM717.7 221.5L724.1 221.5M720.5 218.6L720.5 225M804.6 221.8a3.2 3.2 0 1 0 6.4 0a3.2 3.2 0 1 0 -6.4 0ZM804.6 221.5L811 221.5M807.5 218.6L807.5 225" stroke="#00ffff" stroke-width="1" fill="none"/>
<path d="M722.5 223.5L729.8 228.7" stroke="#00ffff" stroke-width="2" fill="none"/>
<path d="M709.32 72.4L706.63 75.11L702.8 75.12L700.09 72.43L700.08 68.6L702.77 65.89L706.6 65.88L709.31 68.57Z" stroke="#00ffff" stroke-width="1" fill="none"/>
<path d="M703.2 69.5H706.2V72H703.2Z" fill="#ffff00"/>
<path d="M698.7 70.5L710.7 70.5M704.5 64.5L704.5 76.5" stroke="#00ff00" stroke-width="1" fill="none"/>
<path d="M828.62 72.2L825.93 74.91L822.1 74.92L819.39 72.23L819.38 68.4L822.07 65.69L825.9 65.68L828.61 68.37Z" stroke="#00ffff" stroke-width="1" fill="none"/>
<path d="M822.5 69.3H825.5V71.8H822.5Z" fill="#ffff00"/>
<path d="M818 70.5L830 70.5M824.5 64.3L824.5 76.3" stroke="#00ff00" stroke-width="1" fill="none"/>
<path d="M709.12 216.4L706.43 219.11L702.6 219.12L699.89 216.43L699.88 212.6L702.57 209.89L706.4 209.88L709.11 212.57Z" stroke="#00ffff" stroke-width="1" fill="none"/>
<path d="M703 213.5H706V216H703Z" fill="#ffff00"/>
<path d="M698.5 214.5L710.5 214.5M704.5 208.5L704.5 220.5" stroke="#00ff00" stroke-width="1" fill="none"/>
<path d="M828.62 216.4L825.93 219.11L822.1 219.12L819.39 216.43L819.38 212.6L822.07 209.89L825.9 209.88L828.61 212.57Z" stroke="#00ffff" stroke-width="1" fill="none"/>
<path d="M822.5 213.5H825.5V216H822.5Z" fill="#ffff00"/>
<path d="M818 214.5L830 214.5M824.5 208.5L824.5 220.5" stroke="#00ff00" stroke-width="1" fill="none"/>
<path d="M746.2 142.5a18.3 18.3 0 1 0 36.6 0a18.3 18.3 0 1 0 -36.6 0ZM754.2 142.5a10.3 10.3 0 1 0 20.6 0a10.3 10.3 0 1 0 -20.6 0Z" stroke="#ff0000" stroke-width="1" fill="none"/>
<path d="M757.4 142.5a7.1 7.1 0 1 0 14.2 0a7.1 7.1 0 1 0 -14.2 0Z" stroke="#ff0000" stroke-width="1.5" fill="none"/>
<path d="M761.5 142.5a3 3 0 1 0 6 0a3 3 0 1 0 -6 0Z" stroke="#ff0000" stroke-width="1" fill="#ff0000"/>
<path d="M762.5 134L759 137.5M766.5 134L770 137.5" stroke="#ff0000" stroke-width="1" fill="none"/>
<path d="M759.5 148L764.5 158L769.5 148" stroke="#ff0000" stroke-width="1" fill="#ff0000"/>
<path d="M745 142.5L784 142.5M764.5 123L764.5 162" stroke="#00ff00" stroke-width="1" fill="none"/>
<path d="M763.5 129H766V131.5H763.5ZM763.5 154H766V156.5H763.5Z" fill="#ffff00"/>
<path d="M761 129.5L768 129.5M761 155.5L768 155.5" stroke="#00ff00" stroke-width="1" fill="none"/>
<path d="M750.7 80.8L750.7 71L753.1 68.2L776.1 68.2L778.6 71L778.6 81.5M769.5 68.2L769.5 73.5M769.8 73.5L778.6 73.5M767 81.5L780 81.5" stroke="#00ffff" stroke-width="1" fill="none"/>
<path d="M743 73.1H748V75H743ZM747.2 82.9H751.7V85.7H747.2Z" fill="#00ffff"/>
<path d="M751.7 84.3L758.7 82.3" stroke="#00ff00" stroke-width="1" fill="none"/>
<path d="M753.8 74.3L757 74.3L755.4 77.3ZM771.9 74.3L775.1 74.3L773.5 77.3Z" stroke="#ffff00" stroke-width="1" fill="#ffff00"/>
<path d="M762.5 73.5H766.5V77.6H762.5Z" fill="#00ffff"/>
<path d="M755.5 72L755.5 78M773.5 72L773.5 78M766.5 75.5L771 75.5M770.5 74L770.5 78" stroke="#00ff00" stroke-width="1" fill="none"/>
<path d="M758 76.6A6.6 6.6 0 0 0 759.4 89.1" stroke="#00ffff" stroke-width="1" fill="none"/>
<path d="M759 77.8A5 5 0 0 0 759.8 87.4" stroke="#00ff00" stroke-width="1" fill="none"/>
<path d="M760 79.5A3.4 3.4 0 0 0 760.5 86M759.4 86.7L768.8 86.7L767.8 90.2L761 90.2Z" stroke="#00ffff" stroke-width="1" fill="none"/>
<path d="M760 88.5L771 88.5M888.1 23.5L1039.5 23.5M888.1 27.5L1039.5 27.5" stroke="#00ff00" stroke-width="1" fill="none"/>
<path d="M888.5 22L888.5 34.7M910.5 26L910.5 34.7M925.5 26L925.5 34.7M950.5 26L950.5 34.7M983.5 26L983.5 34.7M1004.5 29L1004.5 34.7M1013.5 29L1013.5 34.7M1026.5 29L1026.5 34.7M1039.5 22L1039.5 34.7" stroke="#ff0000" stroke-width="1" fill="none"/>
<path d="M1004.6 29.5L1026 29.5" stroke="#00ff00" stroke-width="1" fill="none"/>
<path d="M898 25.5H902V27H898ZM915 25.5H919V27H915ZM936 25.5H940V27H936ZM965 25.5H969V27H965ZM1003 25.5H1007V27H1003ZM1031 25.5H1035V27H1031ZM962 21.5H966V23H962ZM952 30H955V32H952ZM1009 28.5H1012V30H1009ZM1017 28.5H1022V30H1017Z" fill="#00ffff"/>
<path d="M948 31.5L955 31.5" stroke="#00ff00" stroke-width="1" fill="none"/>
<path d="M888.1 34.5L1039.5 34.5M888.1 250.5L1039.5 250.5M888.5 34.7L888.5 250.4M910.5 34.7L910.5 250.4M925.5 34.7L925.5 250.4M983.5 34.7L983.5 250.4M1004.5 34.7L1004.5 250.4M1013.5 34.7L1013.5 250.4M1026.5 34.7L1026.5 250.4M1039.5 34.7L1039.5 250.4M950.5 34.7L950.5 70M950.5 203L950.5 250.4" stroke="#ffffff" stroke-width="1" fill="none"/>
<path d="M870 142.5L1040 142.5" stroke="#ffffff" stroke-width="1" fill="none" stroke-dasharray="7 2.5"/>
<path d="M928.5 74.2L928.5 204M936.5 68.4L936.5 204M961.5 68.4L961.5 189.2M936.3 68.5L961.4 68.5" stroke="#00ffff" stroke-width="1" fill="none"/>
<path d="M936.3 69.5L961.4 69.5" stroke="#00ff00" stroke-width="1" fill="none"/>
<path d="M939 80L939 197.6M942 80L942 197.6" stroke="#0000ff" stroke-width="2" fill="none"/>
<path d="M940.5 70L940.5 197.6" stroke="#00ff00" stroke-width="1" fill="none"/>
<path d="M938 79H943V83.5H938Z" fill="#0000ff"/>
<path d="M950.3 93Q941 142.3 950.3 191.5" stroke="#ff00ff" stroke-width="2" fill="none"/>
<path d="M949.5 96Q942.5 142.3 949.5 188" stroke="#ff00ff" stroke-width="1" fill="none"/>
<path d="M950.5 84L950.5 193" stroke="#ff0000" stroke-width="1" fill="none"/>
<path d="M950.5 40.5H1012.5V52.5H950.5Z" stroke="#ffffff" stroke-width="1" fill="none"/>
<path d="M962.5 38.5H1004.5V53.5H962.5Z" stroke="#ffffff" stroke-width="2" fill="none"/>
<path d="M963 39L1003 52.6M963 52.6L1003 39M963.5 39.5H1003.5V52.5H963.5ZM944.9 45.5L1012 45.5M950 43.5L1012 43.5M950 47.5L1012 47.5" stroke="#00ff00" stroke-width="1" fill="none"/>
<path d="M945.8 37.5L961.4 37.5M945.8 54.5L961.4 54.5" stroke="#ff0000" stroke-width="1" fill="none"/>
<path d="M945.5 37.8L945.5 54.3M948.5 39.9L948.5 51.8" stroke="#00ff00" stroke-width="1" fill="none"/>
<path d="M944 44H946V48.5H944ZM947.3 44H948.5V48.5H947.3Z" fill="#00ffff"/>
<path d="M961.3 57.5L1004 57.5" stroke="#00ff00" stroke-width="1" fill="none"/>
<path d="M1004.5 38L1004.5 57.2" stroke="#00ffff" stroke-width="1" fill="none" stroke-dasharray="2 3"/>
<path d="M969 35H975V36.5H969ZM981 55.5H985V58H981Z" fill="#00ffff"/>
<path d="M888.5 42.3L899.7 42.3L899.7 43.5L915 43.5L918.6 46L915 48.5L899.7 48.5L899.7 49.7L888.5 49.7Z" stroke="#00ffff" stroke-width="1" fill="none"/>
<path d="M896 44.2H905V46.6H896ZM905 45.3H915V46.6H905ZM892 44H894V48.5H892Z" fill="#ffff00"/>
<path d="M891.5 42.3L891.5 49.7" stroke="#00ffff" stroke-width="1" fill="none"/>
<path d="M896 46.5L915 46.5M892 39.5L912 39.5" stroke="#00ff00" stroke-width="1" fill="none"/>
<path d="M900.6 38H909V40H900.6Z" fill="#00ffff"/>
<path d="M894.5 40L894.5 42.3M899.5 40L899.5 42.3" stroke="#ff0000" stroke-width="1" fill="none"/>
<path d="M939.2 63L942 60L957.7 60L957.7 65.8L942 65.8Z" stroke="#00ffff" stroke-width="1" fill="none"/>
<path d="M945 63.7H952V65.8H945ZM945 60.4H952V61.6H945Z" fill="#ffff00"/>
<path d="M941 62.5L958 62.5" stroke="#00ff00" stroke-width="1" fill="none"/>
<path d="M941.7 63a1.8 1.8 0 1 0 3.6 0a1.8 1.8 0 1 0 -3.6 0Z" stroke="#00ffff" stroke-width="1" fill="none"/>
<path d="M943.7 56.3H948V58H943.7ZM953.2 57.5H957V59H953.2Z" fill="#00ffff"/>
<path d="M953 60.5L960 60.5M953 65.5L960 65.5M941.5 57L941.5 60M951.5 57L951.5 60" stroke="#ff0000" stroke-width="1" fill="none"/>
<path d="M960.5 65.4L960.5 72" stroke="#00ff00" stroke-width="1" fill="none"/>
<path d="M958.8 67H960V72H958.8Z" fill="#00ffff"/>
<path d="M943.7 81.5L961.4 81.5M943.7 84.5L961.4 84.5" stroke="#00ffff" stroke-width="1" fill="none"/>
<path d="M948.5 78.5L948.5 86.7M952.5 78.5L952.5 86.7" stroke="#ff0000" stroke-width="1" fill="none"/>
<path d="M938 71.5L950 71.5M1024.5 42.5L1029 42.5L1032.5 44.5L1032.5 47.5L1029 49.5L1024.5 49.5Z" stroke="#00ffff" stroke-width="1" fill="none"/>
<path d="M1027 45H1032V47.5H1027Z" fill="#00ffff"/>
<path d="M887.3 74.5L1014.8 74.5M887.3 77.5L1014.8 77.5" stroke="#00ffff" stroke-width="1" fill="none"/>
<path d="M886.3 75.5L1015.8 75.5" stroke="#00ff00" stroke-width="1" fill="none"/>
<path d="M889.5 73.5H898.5V78.5H889.5ZM1010.5 72.5H1014.5V78.5H1010.5ZM949 87.5L1014.8 87.5M949 90.5L1014.8 90.5" stroke="#00ffff" stroke-width="1" fill="none"/>
<path d="M948 88.5L1015.8 88.5" stroke="#00ff00" stroke-width="1" fill="none"/>
<path d="M1010.5 85.5H1014.5V91.5H1010.5ZM948.5 86.5H952.5V91.5H948.5Z" stroke="#00ffff" stroke-width="1" fill="none"/>
<path d="M913 79H915.5V87H913Z" fill="#00ffff"/>
<path d="M914.5 71L914.5 80" stroke="#ff0000" stroke-width="1" fill="none"/>
<path d="M915.5 71L915.5 79" stroke="#00ff00" stroke-width="1" fill="none"/>
<path d="M998 79H1000.5V86H998ZM1001.5 66H1004V72H1001.5Z" fill="#00ffff"/>
<path d="M1000.5 86L1000.5 92" stroke="#ff0000" stroke-width="1" fill="none"/>
<path d="M1003.5 72L1003.5 80" stroke="#00ff00" stroke-width="1" fill="none"/>
<path d="M925 71L931 76L925 81M929.5 77.5H935.5V83.5H929.5Z" stroke="#00ffff" stroke-width="1" fill="none"/>
<path d="M923 83.5L934 83.5" stroke="#00ff00" stroke-width="1" fill="none"/>
<path d="M930 73.5H933V76.5H930Z" fill="#0000ff"/>
<path d="M936.5 72.5H941.5V78.5H936.5Z" stroke="#ff0000" stroke-width="1" fill="none"/>
<path d="M944 72.5H947V77.5H944ZM950 73H954V77H950Z" fill="#00ffff"/>
<path d="M942 83L942 94L945 94" stroke="#ff0000" stroke-width="1" fill="none"/>
<path d="M942 91.5H945V94.5H942Z" fill="#00ffff"/>
<path d="M955 92H957.5V95.5H955Z" fill="#0000ff"/>
<path d="M953 93.5L958 93.5" stroke="#00ffff" stroke-width="1" fill="none"/>
<path d="M961.5 55L961.5 68" stroke="#00ff00" stroke-width="1" fill="none"/>
<path d="M960 56H961.5V62H960Z" fill="#00ffff"/>
<path d="M983.5 132.5H1026.5V152.5H983.5ZM1003.5 132.6L1003.5 152M1003 152.5L1026 152.5" stroke="#00ffff" stroke-width="1" fill="none"/>
<path d="M984 142.5L1040 142.5" stroke="#00ff00" stroke-width="1" fill="none"/>
<path d="M999 139.5H1001.5V145H999Z" fill="#ffff00"/>
<path d="M1015.5 142.3L1019 137.5H1024L1027 142.3L1024 147H1019Z" fill="url(#hp)" stroke="#ff8080" stroke-width="1"/>
<path d="M1020 140L1036 140.5L1036 144.5L1020 145ZM1036.5 139.5H1039.5V145.5H1036.5Z" stroke="#00ffff" stroke-width="1" fill="none"/>
<path d="M1021 141.5H1026V143.5H1021Z" fill="#ffff00"/>
<path d="M876.5 124.1L876.5 160.5" stroke="#00ff00" stroke-width="1" fill="none"/>
<path d="M876 124.5L886 124.5M876 160.5L886 160.5" stroke="#ff0000" stroke-width="1" fill="none"/>
<path d="M878.5 129.2L878.5 155.2" stroke="#00ff00" stroke-width="1" fill="none"/>
<path d="M878.7 129.5L886 129.5M878.7 155.5L886 155.5" stroke="#ff0000" stroke-width="1" fill="none"/>
<path d="M881.5 133.3L881.5 151.6" stroke="#00ff00" stroke-width="1" fill="none"/>
<path d="M881 133.5L886 133.5M881 151.5L886 151.5" stroke="#ff0000" stroke-width="1" fill="none"/>
<path d="M885.5 124H891V131H885.5ZM885.5 153.5H891V160.7H885.5Z" fill="url(#hx)" stroke="#00ff00" stroke-width="1"/>
<path d="M886.5 129L886.5 156M891.5 131L891.5 154M886 131.5L899.7 131.5L899.7 153.4L886 153.4M886 131.5L899.7 139M886 153.4L899.7 146" stroke="#00ffff" stroke-width="1" fill="none"/>
<path d="M874.1 140.6H880.5V145.2H874.1ZM882 135H884.5V141H882ZM891.5 128.5H896.5V130.8H891.5ZM891.5 154.5H896.5V156.8H891.5Z" fill="#00ffff"/>
<path d="M892 129.5H895V131H892ZM893.5 137H895.5V140H893.5Z" fill="#ffff00"/>
<path d="M886 142.3L898.3 142.3" stroke="#ff0000" stroke-width="3" fill="none"/>
<path d="M898.8 135.6L904 135.6L908.4 137.4H926.7V147.4H908.4L904 149.7H898.8Z" fill="url(#hx)" stroke="#00ff00" stroke-width="1"/>
<path d="M908.4 137.5L926 137.5M908.4 147.5L926 147.5" stroke="#ff0000" stroke-width="1" fill="none"/>
<path d="M905 133H907.5V136H905Z" fill="#00ffff"/>
<path d="M928.5 139.5H933.5V145.5H928.5Z" stroke="#ff0000" stroke-width="1" fill="none"/>
<path d="M929.5 140.5H932.5V144.5H929.5Z" stroke="#00ffff" stroke-width="1" fill="none"/>
<path d="M935.8 139.7H938V145.2H935.8ZM934 134.2H938.1V136.5H934Z" fill="#00ffff"/>
<path d="M934.5 137.9L934.5 150.6" stroke="#00ff00" stroke-width="1" fill="none"/>
<path d="M932 136L932 138.5L939 138.5M932 148L932 146L939 146" stroke="#ff0000" stroke-width="1" fill="none"/>
<path d="M946.3 139.5L961.4 139.5" stroke="#00ff00" stroke-width="1" fill="none"/>
<path d="M952.3 136.9H956V139H952.3Z" fill="#00ffff"/>
<path d="M961.5 138L961.5 142" stroke="#ff0000" stroke-width="1" fill="none"/>
<path d="M930.5 193L930.5 250.4M934.5 193L934.5 250.4" stroke="#0000ff" stroke-width="1" fill="none"/>
<path d="M932.5 191L932.5 251.9" stroke="#00ff00" stroke-width="1" fill="none"/>
<path d="M930.5 246.5H935.5V250.5H930.5ZM963.5 189.2L963.5 250.4M967.5 189.2L967.5 250.4" stroke="#0000ff" stroke-width="1" fill="none"/>
<path d="M965.5 187.2L965.5 251.9" stroke="#00ff00" stroke-width="1" fill="none"/>
<path d="M962.5 246.5H967.5V250.5H962.5ZM963.5 189.2L963.5 250.4" stroke="#0000ff" stroke-width="1" fill="none"/>
<path d="M950 194.5L1014 194.5M950 198.5L1014 198.5" stroke="#00ffff" stroke-width="1" fill="none"/>
<path d="M949 196.5L1015 196.5" stroke="#00ff00" stroke-width="1" fill="none"/>
<path d="M1010.5 192.5H1014.5V199.5H1010.5Z" stroke="#00ffff" stroke-width="1" fill="none"/>
<path d="M999.5 188L999.5 200" stroke="#00ff00" stroke-width="1" fill="none"/>
<path d="M998 188H1000V193H998Z" fill="#00ffff"/>
<path d="M1000.5 193L1000.5 199" stroke="#ff0000" stroke-width="1" fill="none"/>
<path d="M936.5 199.5H962.5V204.5H936.5Z" stroke="#00ffff" stroke-width="1" fill="none"/>
<path d="M941 205H945V207H941ZM953 205H957.5V207H953Z" fill="#00ffff"/>
<path d="M936 207.5L962 207.5" stroke="#00ff00" stroke-width="1" fill="none"/>
<path d="M936.5 203.5L936.5 207M950.5 203.5L950.5 207M961.5 203.5L961.5 207" stroke="#ff0000" stroke-width="1" fill="none"/>
<path d="M950 193L950 197L962 197" stroke="#00ffff" stroke-width="1" fill="none"/>
<path d="M951 187H956V189.5H951ZM958 188H962V191H958Z" fill="#00ffff"/>
<path d="M936 196L940 196L946 200" stroke="#00ffff" stroke-width="1" fill="none"/>
<path d="M938 195H941V198H938Z" fill="#00ffff"/>
<path d="M925.5 209.5H983.5V219.5H925.5ZM983.5 210.5H987.5V219.5H983.5ZM925.7 211.5L983 211.5M925.7 217.5L983 217.5" stroke="#00ffff" stroke-width="1" fill="none"/>
<path d="M914 214.5L988 214.5" stroke="#00ff00" stroke-width="1" fill="none"/>
<path d="M914.5 214.3L919 212.3L925.5 212.3L925.5 216.3L919 216.3Z" stroke="#00ffff" stroke-width="1" fill="#00ffff"/>
<path d="M942.5 212.2H955V214.5H942.5ZM984 212H986.5V217H984Z" fill="#ffff00"/>
<path d="M951 221.5L960 221.5" stroke="#00ffff" stroke-width="1" fill="none"/>
<path d="M925.7 217L925.7 222" stroke="#ff0000" stroke-width="1" fill="none"/>
<path d="M925.7 222.5L983 222.5" stroke="#00ff00" stroke-width="1" fill="none"/>
<path d="M77.5 494.5H326.5V822.5H77.5ZM259.5 494.3L259.5 822.3M77.7 642.5L326.7 642.5M326.5 490.5L330.5 490.5L330.5 494.5M73.5 822L73.5 826.5L78 826.5M95.5 508.5H212.5Q215.5 508.5 215.5 511.5V628.5Q215.5 631.5 212.5 631.5H95.5Q92.5 631.5 92.5 628.5V511.5Q92.5 508.5 95.5 508.5Z" stroke="#00ffff" stroke-width="1" fill="none"/>
<path d="M90 570.5L217.5 570.5M154.5 507.3L154.5 633.7" stroke="#ffffff" stroke-width="1" fill="none" stroke-dasharray="14 1.5 1.5 1.5"/>
<path d="M92.5 521.3L137.5 521.3" stroke="#0000ff" stroke-width="4.7" fill="none" shape-rendering="geometricPrecision"/>
<path d="M92.5 521.3L137.5 521.3" stroke="#00ff00" stroke-width="1.5" fill="none" shape-rendering="geometricPrecision"/>
<path d="M170.4 521.3L215.2 521.3" stroke="#0000ff" stroke-width="4.7" fill="none" shape-rendering="geometricPrecision"/>
<path d="M170.4 521.3L215.2 521.3" stroke="#00ff00" stroke-width="1.5" fill="none" shape-rendering="geometricPrecision"/>
<path d="M105.5 508.8L105.5 613.3" stroke="#0000ff" stroke-width="4.7" fill="none" shape-rendering="geometricPrecision"/>
<path d="M105.5 508.8L105.5 617.3" stroke="#00ff00" stroke-width="1.5" fill="none" shape-rendering="geometricPrecision"/>
<path d="M101 613.5L110 613.5" stroke="#00ff00" stroke-width="1" fill="none"/>
<path d="M103.5 508.5H108.5V512.5H103.5Z" stroke="#0000ff" stroke-width="1" fill="none"/>
<path d="M135.8 508.8L135.8 624.4" stroke="#0000ff" stroke-width="4.7" fill="none" shape-rendering="geometricPrecision"/>
<path d="M135.8 508.8L135.8 628.4" stroke="#00ff00" stroke-width="1.5" fill="none" shape-rendering="geometricPrecision"/>
<path d="M131.3 624.5L140.3 624.5" stroke="#00ff00" stroke-width="1" fill="none"/>
<path d="M133.5 508.5H138.5V512.5H133.5Z" stroke="#0000ff" stroke-width="1" fill="none"/>
<path d="M172 508.8L172 624.4" stroke="#0000ff" stroke-width="4.7" fill="none" shape-rendering="geometricPrecision"/>
<path d="M172 508.8L172 628.4" stroke="#00ff00" stroke-width="1.5" fill="none" shape-rendering="geometricPrecision"/>
<path d="M167.5 624.5L176.5 624.5" stroke="#00ff00" stroke-width="1" fill="none"/>
<path d="M169.5 508.5H174.5V512.5H169.5Z" stroke="#0000ff" stroke-width="1" fill="none"/>
<path d="M202.8 508.8L202.8 613.3" stroke="#0000ff" stroke-width="4.7" fill="none" shape-rendering="geometricPrecision"/>
<path d="M202.8 508.8L202.8 617.3" stroke="#00ff00" stroke-width="1.5" fill="none" shape-rendering="geometricPrecision"/>
<path d="M198.3 613.5L207.3 613.5" stroke="#00ff00" stroke-width="1" fill="none"/>
<path d="M200.5 508.5H205.5V512.5H200.5ZM92.5 519.5H96.5V523.5H92.5ZM212.5 519.5H215.5V523.5H212.5Z" stroke="#0000ff" stroke-width="1" fill="none"/>
<path d="M104.6 570.5a50 50 0 1 0 100 0a50 50 0 1 0 -100 0ZM106.5 570.5a48.1 48.1 0 1 0 96.2 0a48.1 48.1 0 1 0 -96.2 0ZM108.4 570.5a46.2 46.2 0 1 0 92.4 0a46.2 46.2 0 1 0 -92.4 0Z" stroke="#ff00ff" stroke-width="1" fill="none"/>
<path d="M94.7 514.2a3.2 3.2 0 1 0 6.4 0a3.2 3.2 0 1 0 -6.4 0Z" stroke="#ff0000" stroke-width="1" fill="#c01010"/>
<path d="M96.4 513.2H99.4V515.7H96.4Z" fill="#ffff00"/>
<path d="M92.7 514.5L103.1 514.5M97.5 509L97.5 519.4" stroke="#00ff00" stroke-width="1" fill="none"/>
<path d="M206.8 514.2a3.2 3.2 0 1 0 6.4 0a3.2 3.2 0 1 0 -6.4 0Z" stroke="#ff0000" stroke-width="1" fill="#c01010"/>
<path d="M208.5 513.2H211.5V515.7H208.5Z" fill="#ffff00"/>
<path d="M204.8 514.5L215.2 514.5M210.5 509L210.5 519.4" stroke="#00ff00" stroke-width="1" fill="none"/>
<path d="M94.7 570.5a3.2 3.2 0 1 0 6.4 0a3.2 3.2 0 1 0 -6.4 0Z" stroke="#ff0000" stroke-width="1" fill="#c01010"/>
<path d="M96.4 569.5H99.4V572H96.4Z" fill="#ffff00"/>
<path d="M92.7 570.5L103.1 570.5M97.5 565.3L97.5 575.7" stroke="#00ff00" stroke-width="1" fill="none"/>
<path d="M206.8 570.5a3.2 3.2 0 1 0 6.4 0a3.2 3.2 0 1 0 -6.4 0Z" stroke="#ff0000" stroke-width="1" fill="#c01010"/>
<path d="M208.5 569.5H211.5V572H208.5Z" fill="#ffff00"/>
<path d="M204.8 570.5L215.2 570.5M210.5 565.3L210.5 575.7" stroke="#00ff00" stroke-width="1" fill="none"/>
<path d="M94.7 626.6a3.2 3.2 0 1 0 6.4 0a3.2 3.2 0 1 0 -6.4 0Z" stroke="#ff0000" stroke-width="1" fill="#c01010"/>
<path d="M96.4 625.6H99.4V628.1H96.4Z" fill="#ffff00"/>
<path d="M92.7 626.5L103.1 626.5M97.5 621.4L97.5 631.8" stroke="#00ff00" stroke-width="1" fill="none"/>
<path d="M206.8 626.6a3.2 3.2 0 1 0 6.4 0a3.2 3.2 0 1 0 -6.4 0Z" stroke="#ff0000" stroke-width="1" fill="#c01010"/>
<path d="M208.5 625.6H211.5V628.1H208.5Z" fill="#ffff00"/>
<path d="M204.8 626.5L215.2 626.5M210.5 621.4L210.5 631.8" stroke="#00ff00" stroke-width="1" fill="none"/>
<path d="M91 501.4H93V505.6H91Z" fill="#00ffff"/>
<path d="M92.5 505.6L92.5 509" stroke="#ff0000" stroke-width="1" fill="none"/>
<path d="M97 501.4H99V505.6H97Z" fill="#00ffff"/>
<path d="M97.5 505.6L97.5 509" stroke="#ff0000" stroke-width="1" fill="none"/>
<path d="M104 501.4H106V505.6H104Z" fill="#00ffff"/>
<path d="M105.5 505.6L105.5 509" stroke="#ff0000" stroke-width="1" fill="none"/>
<path d="M135 501.4H137V505.6H135Z" fill="#00ffff"/>
<path d="M135.5 505.6L135.5 509" stroke="#ff0000" stroke-width="1" fill="none"/>
<path d="M153 501.4H155V505.6H153Z" fill="#00ffff"/>
<path d="M154.5 505.6L154.5 509" stroke="#ff0000" stroke-width="1" fill="none"/>
<path d="M171 501.4H173V505.6H171Z" fill="#00ffff"/>
<path d="M172.5 505.6L172.5 509" stroke="#ff0000" stroke-width="1" fill="none"/>
<path d="M201 501.4H203V505.6H201Z" fill="#00ffff"/>
<path d="M202.5 505.6L202.5 509" stroke="#ff0000" stroke-width="1" fill="none"/>
<path d="M209 501.4H211V505.6H209Z" fill="#00ffff"/>
<path d="M209.5 505.6L209.5 509" stroke="#ff0000" stroke-width="1" fill="none"/>
<path d="M214 501.4H216V505.6H214Z" fill="#00ffff"/>
<path d="M215.5 505.6L215.5 509M215 508.5L220 508.5" stroke="#ff0000" stroke-width="1" fill="none"/>
<path d="M220 507.2H224V509H220Z" fill="#00ffff"/>
<path d="M215 513.5L220 513.5" stroke="#ff0000" stroke-width="1" fill="none"/>
<path d="M220 512.8H224V514.6H220Z" fill="#00ffff"/>
<path d="M215 520.5L220 520.5" stroke="#ff0000" stroke-width="1" fill="none"/>
<path d="M220 519.9H224V521.7H220Z" fill="#00ffff"/>
<path d="M215 626.5L220 626.5" stroke="#ff0000" stroke-width="1" fill="none"/>
<path d="M220 625.3H224V627.1H220Z" fill="#00ffff"/>
<path d="M215 631.5L220 631.5" stroke="#ff0000" stroke-width="1" fill="none"/>
<path d="M220 630.5H224V632.3H220ZM220 569.5H223V571H220Z" fill="#00ffff"/>
<path d="M216 570.5L220 570.5M202.5 613.5L220 613.5" stroke="#ff0000" stroke-width="1" fill="none"/>
<path d="M220 612.3H224V614H220Z" fill="#00ffff"/>
<path d="M154 624.5L220 624.5" stroke="#ff0000" stroke-width="1" fill="none"/>
<path d="M220 623.3H224V625H220Z" fill="#00ffff"/>
<path d="M152 624.4a1.8 1.8 0 1 0 3.6 0a1.8 1.8 0 1 0 -3.6 0Z" stroke="#ffff00" stroke-width="1" fill="#ffff00"/>
<path d="M152.5 613L152.5 617" stroke="#ff0000" stroke-width="1" fill="none"/>
<path d="M154.5 614.5H159V616H154.5Z" fill="#00ffff"/>
<path d="M151 614.5L158 614.5" stroke="#00ff00" stroke-width="1" fill="none"/>
<path d="M152 513A5 5 0 0 0 162 517.5" stroke="#00ffff" stroke-width="1" fill="none"/>
<path d="M150 517A8 8 0 0 0 164 515" stroke="#00ff00" stroke-width="1" fill="none"/>
<path d="M158 510L166 510L170 513M168.7 512.5a1.3 1.3 0 1 0 2.6 0a1.3 1.3 0 1 0 -2.6 0Z" stroke="#00ffff" stroke-width="1" fill="none"/>
<path d="M140 514H145V516H140Z" fill="#00ffff"/>
<path d="M140 516.5L149 516.5" stroke="#ff0000" stroke-width="1" fill="none"/>
<path d="M155 509A5 5 0 0 1 163 514M251.5 504.5L251.5 631.8M240.5 504.5H251.5V515.5H240.5ZM240.5 622.5H251.5V631.5H240.5Z" stroke="#00ffff" stroke-width="1" fill="none"/>
<path d="M241.5 504.5L241.5 621M245.5 505L245.5 515M241 507.5L252 507.5" stroke="#ff0000" stroke-width="1" fill="none"/>
<path d="M241 520.3Q232.8 570.5 241 620.7" stroke="#ff00ff" stroke-width="1" fill="none"/>
<path d="M231 570.5L254.8 570.5" stroke="#ffffff" stroke-width="1" fill="none" stroke-dasharray="8 2"/>
<path d="M240 503.5L251 503.5" stroke="#00ff00" stroke-width="1" fill="none"/>
<path d="M243 502H249V503.5H243Z" fill="#00ffff"/>
<path d="M234 516.5L253 516.5" stroke="#00ff00" stroke-width="1" fill="none"/>
<path d="M236 514H240V517.5H236ZM235 519H240V520.5H235Z" fill="#00ffff"/>
<path d="M244 519L246.5 521.5L244 524L246.5 521.5L249 521.5" stroke="#0000ff" stroke-width="1" fill="none"/>
<path d="M246 521H247V522H246Z" fill="#ff8080"/>
<path d="M238 566.5L254 566.5" stroke="#00ff00" stroke-width="1" fill="none"/>
<path d="M244 565H248V566.3H244Z" fill="#00ffff"/>
<path d="M238 566.3L241 568.5" stroke="#00ff00" stroke-width="1" fill="none"/>
<path d="M240.5 578H247V579.8H240.5Z" fill="#00ffff"/>
<path d="M238 580L241 578" stroke="#00ff00" stroke-width="1" fill="none"/>
<path d="M244 611.5H252V615.5H244Z" fill="#0000ff"/>
<path d="M244.7 613.5a1.3 1.3 0 1 0 2.6 0a1.3 1.3 0 1 0 -2.6 0Z" stroke="#ff8080" stroke-width="1" fill="#ff8080"/>
<path d="M247 613.5L252 613.5" stroke="#00ff00" stroke-width="1" fill="none"/>
<path d="M248 610L251 607.5" stroke="#00ffff" stroke-width="2" fill="none"/>
<path d="M239.5 621.5L252 621.5M240 625.5L253 625.5" stroke="#00ff00" stroke-width="1" fill="none"/>
<path d="M241 620H250V621.5H241ZM248 627H250V632H248Z" fill="#00ffff"/>
<path d="M124.5 657.5H239.5Q243.5 657.5 243.5 661.5V777.5Q243.5 781.5 239.5 781.5H124.5Q120.5 781.5 120.5 777.5V661.5Q120.5 657.5 124.5 657.5Z" stroke="#00ffff" stroke-width="1" fill="none"/>
<path d="M113.8 719.5L246.4 719.5" stroke="#ffffff" stroke-width="1" fill="none" stroke-dasharray="14 1.5 1.5 1.5"/>
<path d="M86.4 719.5L106.8 719.5" stroke="#ffffff" stroke-width="1" fill="none" stroke-dasharray="8 2"/>
<path d="M182.5 657L182.5 783.7" stroke="#ffffff" stroke-width="1" fill="none" stroke-dasharray="14 1.5 1.5 1.5"/>
<path d="M182.5 795.3L182.5 816.2" stroke="#ffffff" stroke-width="1" fill="none" stroke-dasharray="8 2"/>
<path d="M120.3 671.2L166.5 671.2" stroke="#0000ff" stroke-width="4.7" fill="none" shape-rendering="geometricPrecision"/>
<path d="M120.3 671.2L166.5 671.2" stroke="#00ff00" stroke-width="1.5" fill="none" shape-rendering="geometricPrecision"/>
<path d="M199 671.2L243.9 671.2" stroke="#0000ff" stroke-width="4.7" fill="none" shape-rendering="geometricPrecision"/>
<path d="M199 671.2L243.9 671.2" stroke="#00ff00" stroke-width="1.5" fill="none" shape-rendering="geometricPrecision"/>
<path d="M133.5 657.8L133.5 763.2" stroke="#0000ff" stroke-width="4.7" fill="none" shape-rendering="geometricPrecision"/>
<path d="M133.5 657.8L133.5 767.2" stroke="#00ff00" stroke-width="1.5" fill="none" shape-rendering="geometricPrecision"/>
<path d="M129 763.5L138 763.5" stroke="#00ff00" stroke-width="1" fill="none"/>
<path d="M131.5 657.8H135.5V660.5H131.5Z" fill="#0000ff"/>
<path d="M164.6 657.8L164.6 775" stroke="#0000ff" stroke-width="4.7" fill="none" shape-rendering="geometricPrecision"/>
<path d="M164.6 657.8L164.6 779" stroke="#00ff00" stroke-width="1.5" fill="none" shape-rendering="geometricPrecision"/>
<path d="M160.1 775.5L169.1 775.5" stroke="#00ff00" stroke-width="1" fill="none"/>
<path d="M162.6 657.8H166.6V660.5H162.6Z" fill="#0000ff"/>
<path d="M200.8 657.8L200.8 775" stroke="#0000ff" stroke-width="4.7" fill="none" shape-rendering="geometricPrecision"/>
<path d="M200.8 657.8L200.8 779" stroke="#00ff00" stroke-width="1.5" fill="none" shape-rendering="geometricPrecision"/>
<path d="M196.3 775.5L205.3 775.5" stroke="#00ff00" stroke-width="1" fill="none"/>
<path d="M198.8 657.8H202.8V660.5H198.8Z" fill="#0000ff"/>
<path d="M231.3 657.8L231.3 763.2" stroke="#0000ff" stroke-width="4.7" fill="none" shape-rendering="geometricPrecision"/>
<path d="M231.3 657.8L231.3 767.2" stroke="#00ff00" stroke-width="1.5" fill="none" shape-rendering="geometricPrecision"/>
<path d="M226.8 763.5L235.8 763.5" stroke="#00ff00" stroke-width="1" fill="none"/>
<path d="M229.3 657.8H233.3V660.5H229.3ZM120.3 668.5H125V673.8H120.3ZM239.5 668.5H243.9V673.8H239.5Z" fill="#0000ff"/>
<path d="M133.8 719.3a48.5 48.5 0 1 0 97 0a48.5 48.5 0 1 0 -97 0ZM135.3 719.3a47 47 0 1 0 94 0a47 47 0 1 0 -94 0ZM136.8 719.3a45.5 45.5 0 1 0 91 0a45.5 45.5 0 1 0 -91 0Z" stroke="#ff00ff" stroke-width="1" fill="none"/>
<path d="M132.3 719.3a50 50 0 1 0 100 0a50 50 0 1 0 -100 0Z" stroke="#ff0000" stroke-width="1" fill="none" stroke-dasharray="6 3 2 3"/>
<path d="M122.9 663.8a3.2 3.2 0 1 0 6.4 0a3.2 3.2 0 1 0 -6.4 0Z" stroke="#ff0000" stroke-width="1" fill="#c01010"/>
<path d="M124.6 662.8H127.6V665.3H124.6Z" fill="#ffff00"/>
<path d="M120.9 663.5L131.3 663.5M126.5 658.6L126.5 669" stroke="#00ff00" stroke-width="1" fill="none"/>
<path d="M235.3 663.8a3.2 3.2 0 1 0 6.4 0a3.2 3.2 0 1 0 -6.4 0Z" stroke="#ff0000" stroke-width="1" fill="#c01010"/>
<path d="M237 662.8H240V665.3H237Z" fill="#ffff00"/>
<path d="M233.3 663.5L243.7 663.5M238.5 658.6L238.5 669" stroke="#00ff00" stroke-width="1" fill="none"/>
<path d="M122.9 719.3a3.2 3.2 0 1 0 6.4 0a3.2 3.2 0 1 0 -6.4 0Z" stroke="#ff0000" stroke-width="1" fill="#c01010"/>
<path d="M124.6 718.3H127.6V720.8H124.6Z" fill="#ffff00"/>
<path d="M120.9 719.5L131.3 719.5M126.5 714.1L126.5 724.5" stroke="#00ff00" stroke-width="1" fill="none"/>
<path d="M235.3 719.3a3.2 3.2 0 1 0 6.4 0a3.2 3.2 0 1 0 -6.4 0Z" stroke="#ff0000" stroke-width="1" fill="#c01010"/>
<path d="M237 718.3H240V720.8H237Z" fill="#ffff00"/>
<path d="M233.3 719.5L243.7 719.5M238.5 714.1L238.5 724.5" stroke="#00ff00" stroke-width="1" fill="none"/>
<path d="M122.9 775.5a3.2 3.2 0 1 0 6.4 0a3.2 3.2 0 1 0 -6.4 0Z" stroke="#ff0000" stroke-width="1" fill="#c01010"/>
<path d="M124.6 774.5H127.6V777H124.6Z" fill="#ffff00"/>
<path d="M120.9 775.5L131.3 775.5M126.5 770.3L126.5 780.7" stroke="#00ff00" stroke-width="1" fill="none"/>
<path d="M235.3 775.5a3.2 3.2 0 1 0 6.4 0a3.2 3.2 0 1 0 -6.4 0Z" stroke="#ff0000" stroke-width="1" fill="#c01010"/>
<path d="M237 774.5H240V777H237Z" fill="#ffff00"/>
<path d="M233.3 775.5L243.7 775.5M238.5 770.3L238.5 780.7" stroke="#00ff00" stroke-width="1" fill="none"/>
<path d="M119 651H121V654.8H119Z" fill="#00ffff"/>
<path d="M120.5 654.8L120.5 658.5" stroke="#ff0000" stroke-width="1" fill="none"/>
<path d="M125 651H127V654.8H125Z" fill="#00ffff"/>
<path d="M126.5 654.8L126.5 658.5" stroke="#ff0000" stroke-width="1" fill="none"/>
<path d="M132 651H134V654.8H132Z" fill="#00ffff"/>
<path d="M133.5 654.8L133.5 658.5" stroke="#ff0000" stroke-width="1" fill="none"/>
<path d="M163 651H165V654.8H163Z" fill="#00ffff"/>
<path d="M164.5 654.8L164.5 658.5" stroke="#ff0000" stroke-width="1" fill="none"/>
<path d="M181 651H183V654.8H181Z" fill="#00ffff"/>
<path d="M182.5 654.8L182.5 658.5" stroke="#ff0000" stroke-width="1" fill="none"/>
<path d="M199 651H201V654.8H199Z" fill="#00ffff"/>
<path d="M200.5 654.8L200.5 658.5" stroke="#ff0000" stroke-width="1" fill="none"/>
<path d="M230 651H232V654.8H230Z" fill="#00ffff"/>
<path d="M230.5 654.8L230.5 658.5" stroke="#ff0000" stroke-width="1" fill="none"/>
<path d="M237 651H239V654.8H237Z" fill="#00ffff"/>
<path d="M238.5 654.8L238.5 658.5" stroke="#ff0000" stroke-width="1" fill="none"/>
<path d="M243 651H245V654.8H243Z" fill="#00ffff"/>
<path d="M243.5 654.8L243.5 658.5" stroke="#ff0000" stroke-width="1" fill="none"/>
<path d="M112.6 657.2H116.3V659H112.6Z" fill="#00ffff"/>
<path d="M116 658.5L120.3 658.5" stroke="#ff0000" stroke-width="1" fill="none"/>
<path d="M112.6 661.9H116.3V663.7H112.6Z" fill="#00ffff"/>
<path d="M116 662.5L120.3 662.5" stroke="#ff0000" stroke-width="1" fill="none"/>
<path d="M112.6 669.3H116.3V671.1H112.6Z" fill="#00ffff"/>
<path d="M116 670.5L120.3 670.5" stroke="#ff0000" stroke-width="1" fill="none"/>
<path d="M112.6 779.9H116.3V781.7H112.6Z" fill="#00ffff"/>
<path d="M116 780.5L120.3 780.5" stroke="#ff0000" stroke-width="1" fill="none"/>
<path d="M113.5 718H116.5V720.3H113.5ZM112.6 761.3H116.3V763H112.6Z" fill="#00ffff"/>
<path d="M116 762.5L133.5 762.5" stroke="#ff0000" stroke-width="1" fill="none"/>
<path d="M112.6 772H116.5V776H112.6Z" fill="#00ffff"/>
<path d="M116 774.5L163.7 774.5" stroke="#ff0000" stroke-width="1" fill="none"/>
<path d="M172 658L172 661L175 665L180 667.5L187 667L188.5 665.5L187 664L181 664L178 661.5L178 658" stroke="#00ffff" stroke-width="1" fill="none"/>
<path d="M174 658A9 9 0 0 0 186 666" stroke="#00ff00" stroke-width="1" fill="none"/>
<path d="M87.5 657L87.5 787M89.5 660L89.5 770M102.5 657L102.5 787M87.6 657.5L102.2 657.5M87.6 787.5L102.2 787.5" stroke="#00ffff" stroke-width="1" fill="none"/>
<path d="M91.5 660L91.5 770M94.5 660L94.5 770" stroke="#0000ff" stroke-width="1" fill="none"/>
<path d="M92.5 660L92.5 775" stroke="#00ff00" stroke-width="1" fill="none"/>
<path d="M89.5 657.5H95V662H89.5Z" fill="#0000ff"/>
<path d="M90 669.5L96 669.5" stroke="#00ff00" stroke-width="1" fill="none"/>
<path d="M101.5 669.5Q91.7 719 101.5 767.5M101.5 662L101.5 669.5" stroke="#ff00ff" stroke-width="1" fill="none"/>
<path d="M98 654.5H102V656.5H98Z" fill="#00ffff"/>
<path d="M100.5 662L100.5 668L102 668" stroke="#ff0000" stroke-width="1" fill="none"/>
<path d="M98 708H104.5V710H98ZM103 716H107V718.5H103Z" fill="#00ffff"/>
<path d="M87.6 770.5L102 770.5M88 777.5L102 777.5M88 786.5L102 786.5M92.5 770L92.5 787M90 773A4 4 0 0 1 97 779" stroke="#ff0000" stroke-width="1" fill="none"/>
<path d="M89 774H95V776.5H89Z" fill="#ffff00"/>
<path d="M88 768L93 771L100 774" stroke="#00ffff" stroke-width="2" fill="none"/>
<path d="M90 784.5L100 784.5" stroke="#00ff00" stroke-width="1" fill="none"/>
<path d="M95 782H101V784H95Z" fill="#00ffff"/>
<path d="M88.5 782L88.5 788M101.5 782L101.5 788" stroke="#ff0000" stroke-width="1" fill="none"/>
<path d="M120.5 800.5H243.5V814.5H120.5Z" stroke="#00ffff" stroke-width="1" fill="none"/>
<path d="M120.3 808L165 808" stroke="#0000ff" stroke-width="2" fill="none"/>
<path d="M120.3 810.5L165 810.5" stroke="#0000ff" stroke-width="1" fill="none"/>
<path d="M120.3 811.5L165 811.5" stroke="#00ff00" stroke-width="1" fill="none"/>
<path d="M199.7 808L243.9 808" stroke="#0000ff" stroke-width="2" fill="none"/>
<path d="M199.7 810.5L243.9 810.5" stroke="#0000ff" stroke-width="1" fill="none"/>
<path d="M199.7 811.5L243.9 811.5" stroke="#00ff00" stroke-width="1" fill="none"/>
<path d="M132.4 800.4Q182.3 812.4 232.7 800.4" stroke="#ff00ff" stroke-width="1" fill="none"/>
<path d="M118.5 800L118.5 814.5" stroke="#ff0000" stroke-width="1" fill="none"/>
<path d="M115.5 802H117.5V811H115.5Z" fill="#00ffff"/>
<path d="M117.5 800L117.5 815M247.5 800L247.5 815" stroke="#00ff00" stroke-width="1" fill="none"/>
<path d="M245.5 802L245.5 813" stroke="#ff0000" stroke-width="1" fill="none"/>
<path d="M120.5 806H124V811H120.5ZM240 806H243.5V811H240Z" fill="#0000ff"/>
<path d="M163 815L165.5 806L169 802M201.5 815L199 806L195.5 802" stroke="#00ffff" stroke-width="2" fill="none"/>
<path d="M164.5 806L164.5 816M200.5 806L200.5 816" stroke="#00ff00" stroke-width="1" fill="none"/>
<path d="M163.5 811a1 1 0 1 0 2 0a1 1 0 1 0 -2 0ZM199.5 811a1 1 0 1 0 2 0a1 1 0 1 0 -2 0Z" stroke="#ff00ff" stroke-width="1" fill="#ff00ff"/>
<path d="M130 808L132 805.5L134 808L132 810.5ZM231 808L233 805.5L235 808L233 810.5Z" stroke="#ff8080" stroke-width="1" fill="#ffff00"/>
<path d="M128 808.5L136 808.5M229 808.5L237 808.5" stroke="#00ff00" stroke-width="1" fill="none"/>
<path d="M179.5 795H181V799H179.5Z" fill="#00ffff"/>
<path d="M264.5 555.5H276.5V569.5H264.5Z" stroke="#00ffff" stroke-width="1" fill="none"/>
<path d="M264 553.5L277 553.5" stroke="#00ff00" stroke-width="1" fill="none"/>
<path d="M268 551.5H274V553H268Z" fill="#00ffff"/>
<path d="M264 564.5L276.6 564.5" stroke="#00ffff" stroke-width="1" fill="none"/>
<path d="M266 562.5L280 562.5" stroke="#00ff00" stroke-width="1" fill="none"/>
<path d="M261.5 560H263V567H261.5Z" fill="#00ffff"/>
<path d="M277 561.5L280.5 564L277 566Z" stroke="#00ffff" stroke-width="1" fill="#00ffff"/>
<path d="M274.5 558L274.5 569" stroke="#ff0000" stroke-width="1" fill="none"/>
<path d="M270 560H273V563H270Z" fill="#00ffff"/>
<path d="M283.5 556.5H322.5V570.5H283.5Z" stroke="#00ffff" stroke-width="1" fill="none"/>
<path d="M286.5 556.5H323.5V570.5H286.5ZM286.3 551.5L315.5 551.5M286.5 551L286.5 556.5M315.5 551L315.5 556.5" stroke="#ff0000" stroke-width="1" fill="none"/>
<path d="M286 549.5L316 549.5M291 553.5L310.5 553.5" stroke="#00ff00" stroke-width="1" fill="none"/>
<path d="M291 555.5L310.5 555.5M291.5 553.7L291.5 570M310.5 553.7L310.5 562" stroke="#ff0000" stroke-width="1" fill="none"/>
<path d="M299 548.3H303.5V550H299Z" fill="#00ffff"/>
<path d="M301.5 553L301.5 575" stroke="#00ff00" stroke-width="1" fill="none"/>
<path d="M296 573.5H299.5V575H296ZM302 573.5H306V575H302Z" fill="#00ffff"/>
<path d="M296 573.5L307 573.5" stroke="#00ff00" stroke-width="1" fill="none"/>
<path d="M288 559A7 7 0 0 1 288 569M319 559A7 7 0 0 0 319 569M290 569L294 560L298 569" stroke="#00ffff" stroke-width="1" fill="none"/>
<path d="M292 563.5L318 563.5" stroke="#ff0000" stroke-width="1" fill="none"/>
<path d="M296 565.5L312 565.5M283.5 558L283.5 569M318.5 558L318.5 569" stroke="#00ff00" stroke-width="1" fill="none"/>
<path d="M281 562H283V567H281ZM318.5 563H321V568H318.5ZM317 554.5H320V556.5H317Z" fill="#00ffff"/>
<path d="M309.5 560L309.5 570M303 560.5L318 560.5" stroke="#ff0000" stroke-width="1" fill="none"/>
<path d="M311 558L314.5 562" stroke="#00ffff" stroke-width="2" fill="none"/>
<path d="M286.5 581.5H315.5V595.5H286.5Z" stroke="#00ffff" stroke-width="1" fill="none"/>
<path d="M292.8 583.5L305.8 583.5" stroke="#ff0000" stroke-width="1" fill="none"/>
<path d="M301.5 581L301.5 596.5" stroke="#00ff00" stroke-width="1" fill="none"/>
<path d="M292.8 583L291 580" stroke="#ff0000" stroke-width="1" fill="none"/>
<path d="M286.5 577L292 584" stroke="#00ffff" stroke-width="2" fill="none"/>
<path d="M305.8 583L305.8 581" stroke="#ff0000" stroke-width="1" fill="none"/>
<path d="M291 590H293V595H291Z" fill="#ff0000"/>
<path d="M291.4 591.5H292.6V594.5H291.4Z" fill="#ffff00"/>
<path d="M309 590H311V595H309Z" fill="#ff0000"/>
<path d="M309.4 591.5H310.6V594.5H309.4Z" fill="#ffff00"/>
<path d="M297 630.8H301.5V632H297Z" fill="#00ffff"/>
<path d="M281.5 692.5H310.5V705.5H281.5Z" stroke="#00ffff" stroke-width="1" fill="none"/>
<path d="M273.5 692.5H313.5V706.5H273.5Z" stroke="#ff0000" stroke-width="1" fill="none"/>
<path d="M281 685.5L310.5 685.5" stroke="#00ff00" stroke-width="1" fill="none"/>
<path d="M281.5 685.3L281.5 692M310.5 685.3L310.5 692M281 686.5L310.5 686.5" stroke="#ff0000" stroke-width="1" fill="none"/>
<path d="M286.3 689.5L303.7 689.5" stroke="#00ff00" stroke-width="1" fill="none"/>
<path d="M286.3 690.5L303.7 690.5M286.5 689.4L286.5 705M303.5 689.4L303.5 698" stroke="#ff0000" stroke-width="1" fill="none"/>
<path d="M295.5 685L295.5 710" stroke="#00ff00" stroke-width="1" fill="none"/>
<path d="M293.5 683.7H297V685.2H293.5ZM291 709H294V710.5H291ZM296 709H300V710.5H296Z" fill="#00ffff"/>
<path d="M294 696.5H298Q300.5 696.5 300.5 699V700Q300.5 702.5 298 702.5H294Q291.5 702.5 291.5 700V699Q291.5 696.5 294 696.5Z" stroke="#00ffff" stroke-width="1" fill="none"/>
<path d="M293 698H299V700.5H293Z" fill="#ffff00"/>
<path d="M308 694A7 7 0 0 0 308 704M284 694A7 7 0 0 1 284 704" stroke="#00ffff" stroke-width="1" fill="none"/>
<path d="M276 685L282 693" stroke="#00ffff" stroke-width="2" fill="none"/>
<path d="M276.5 693L276.5 706M312.5 693L312.5 706" stroke="#00ff00" stroke-width="1" fill="none"/>
<path d="M272 696H274V701H272ZM311 697H313V702H311Z" fill="#00ffff"/>
<path d="M277 699.5L291 699.5M300.5 699L306 695L306 704" stroke="#ff0000" stroke-width="1" fill="none"/>
<path d="M288.5 693L288.5 705M281.5 719.5H310.5V733.5H281.5Z" stroke="#00ffff" stroke-width="1" fill="none"/>
<path d="M277.5 719L277.5 733M291.3 721.5L304.9 721.5" stroke="#ff0000" stroke-width="1" fill="none"/>
<path d="M295.5 719L295.5 734.5" stroke="#00ff00" stroke-width="1" fill="none"/>
<path d="M304.9 721.2L306.5 718.5" stroke="#ff0000" stroke-width="1" fill="none"/>
<path d="M305 722L309.5 716" stroke="#00ffff" stroke-width="2" fill="none"/>
<path d="M306 716.5L309 714" stroke="#00ff00" stroke-width="1" fill="none"/>
<path d="M276 721L276 731" stroke="#00ffff" stroke-width="2" fill="none"/>
<path d="M285.5 728H287.5V733H285.5Z" fill="#ff0000"/>
<path d="M285.9 729.5H287V732.5H285.9Z" fill="#ffff00"/>
<path d="M303.5 728H305.5V733H303.5Z" fill="#ff0000"/>
<path d="M303.9 729.5H305V732.5H303.9Z" fill="#ffff00"/>
<path d="M297 752H301V753.5H297ZM527 570H528V571H527ZM387 718H388V719H387Z" fill="#00ffff"/>
<text x="0" y="0" font-size="14.1" fill="#ffffff" font-weight="300" font-family='"Liberation Sans","Noto Sans CJK SC",sans-serif' transform="translate(591.2 404.2) scale(1 1.14)">仅供学习交流</text>
<text x="279.5" y="257.2" font-size="3.6" fill="#ffffff" font-weight="bold" font-family='"Liberation Sans",sans-serif' >SECTION</text>
<text x="277" y="415" font-size="3.6" fill="#ffffff" font-weight="bold" font-family='"Liberation Sans",sans-serif' >SECTION A-A</text>
<text x="656.4" y="259.5" font-size="3.3" fill="#ffffff" font-weight="bold" font-family='"Liberation Sans",sans-serif' >MOULDING</text>
<text x="898" y="257.2" font-size="3.5" fill="#ffffff" font-weight="bold" font-family='"Liberation Sans",sans-serif' >SECTION B-B</text>
</svg>
<div id="botl"></div><div id="bot"></div><div id="botl2"></div><div id="bot2"></div>
</body></html>
